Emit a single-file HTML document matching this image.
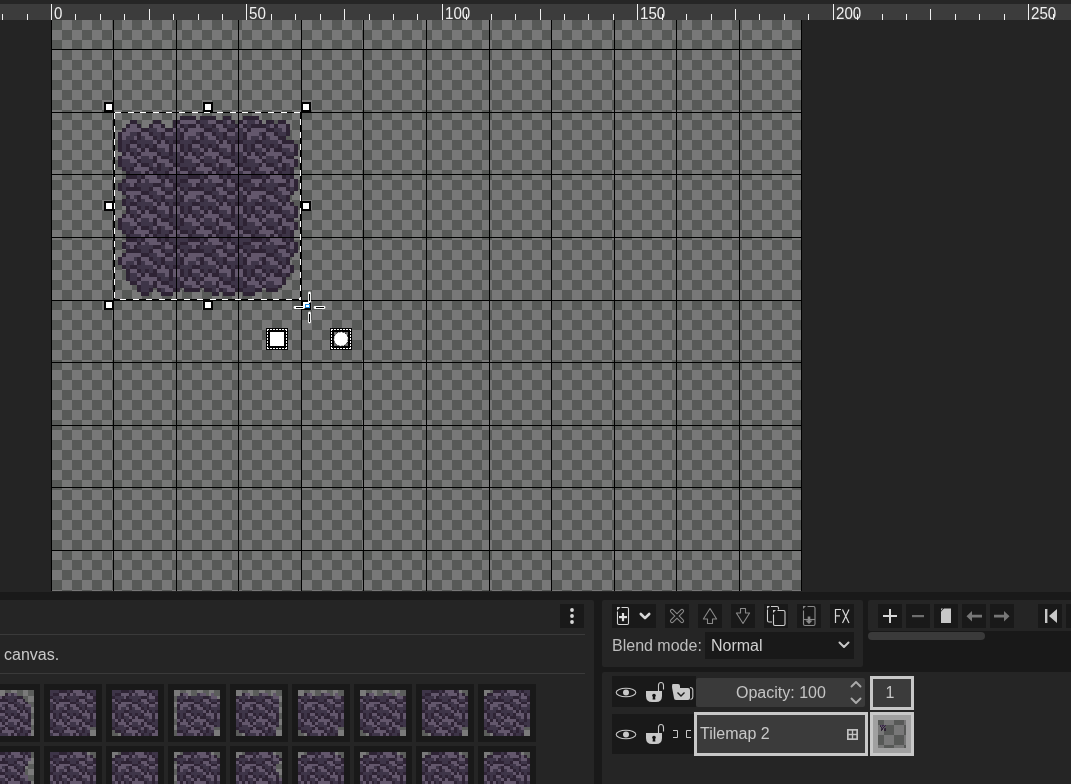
<!DOCTYPE html>
<html><head><meta charset="utf-8"><style>
html,body{margin:0;padding:0;width:1071px;height:784px;overflow:hidden;background:#191919;font-family:"Liberation Sans",sans-serif;}
.abs{position:absolute}
</style></head><body>
<div style="position:relative;width:1071px;height:784px;overflow:hidden;will-change:transform">
<svg width="1071" height="600" viewBox="0 0 1071 600" style="position:absolute;left:0;top:0" shape-rendering="crispEdges">
<defs><pattern id="chk" x="52" y="20" width="20" height="20" patternUnits="userSpaceOnUse"><rect width="20" height="20" fill="#787878"/><rect width="10" height="10" fill="#575957"/><rect x="10" y="10" width="10" height="10" fill="#575957"/></pattern></defs>
<rect x="0" y="0" width="1071" height="600" fill="#191919"/>
<rect x="0" y="0" width="1071" height="4" fill="#262626"/>
<rect x="0" y="4" width="1071" height="16" fill="#3c3c3c"/>
<rect x="0" y="20" width="1071" height="572" fill="#242424"/>
<rect x="52" y="20" width="749" height="571" fill="url(#chk)"/>
<rect x="180" y="116" width="16" height="4" fill="#2e2334"/>
<rect x="200" y="116" width="16" height="4" fill="#2e2334"/>
<rect x="223" y="116" width="8" height="4" fill="#2e2334"/>
<rect x="243" y="116" width="16" height="4" fill="#2e2334"/>
<rect x="130" y="120" width="7" height="4" fill="#2e2334"/>
<rect x="153" y="120" width="8" height="4" fill="#2e2334"/>
<rect x="173" y="120" width="7" height="4" fill="#2e2334"/>
<rect x="180" y="120" width="16" height="4" fill="#63576c"/>
<rect x="196" y="120" width="4" height="4" fill="#2e2334"/>
<rect x="200" y="120" width="8" height="4" fill="#3e3548"/>
<rect x="208" y="120" width="8" height="4" fill="#63576c"/>
<rect x="216" y="120" width="7" height="4" fill="#2e2334"/>
<rect x="223" y="120" width="4" height="4" fill="#3e3548"/>
<rect x="227" y="120" width="4" height="4" fill="#63576c"/>
<rect x="231" y="120" width="4" height="4" fill="#2e2334"/>
<rect x="239" y="120" width="4" height="4" fill="#2e2334"/>
<rect x="243" y="120" width="4" height="4" fill="#63576c"/>
<rect x="247" y="120" width="8" height="4" fill="#3e3548"/>
<rect x="255" y="120" width="4" height="4" fill="#63576c"/>
<rect x="259" y="120" width="3" height="4" fill="#2e2334"/>
<rect x="266" y="120" width="8" height="4" fill="#2e2334"/>
<rect x="278" y="120" width="8" height="4" fill="#2e2334"/>
<rect x="126" y="124" width="4" height="4" fill="#2e2334"/>
<rect x="130" y="124" width="7" height="4" fill="#63576c"/>
<rect x="137" y="124" width="4" height="4" fill="#2e2334"/>
<rect x="149" y="124" width="4" height="4" fill="#2e2334"/>
<rect x="153" y="124" width="8" height="4" fill="#63576c"/>
<rect x="161" y="124" width="4" height="4" fill="#2e2334"/>
<rect x="173" y="124" width="4" height="4" fill="#2e2334"/>
<rect x="177" y="124" width="3" height="4" fill="#63576c"/>
<rect x="180" y="124" width="4" height="4" fill="#2e2334"/>
<rect x="184" y="124" width="4" height="4" fill="#3e3548"/>
<rect x="188" y="124" width="8" height="4" fill="#2e2334"/>
<rect x="196" y="124" width="4" height="4" fill="#63576c"/>
<rect x="200" y="124" width="4" height="4" fill="#2e2334"/>
<rect x="204" y="124" width="8" height="4" fill="#3e3548"/>
<rect x="212" y="124" width="4" height="4" fill="#2e2334"/>
<rect x="216" y="124" width="7" height="4" fill="#63576c"/>
<rect x="223" y="124" width="4" height="4" fill="#2e2334"/>
<rect x="227" y="124" width="8" height="4" fill="#3e3548"/>
<rect x="235" y="124" width="4" height="4" fill="#2e2334"/>
<rect x="239" y="124" width="4" height="4" fill="#63576c"/>
<rect x="243" y="124" width="4" height="4" fill="#2e2334"/>
<rect x="247" y="124" width="4" height="4" fill="#3e3548"/>
<rect x="251" y="124" width="15" height="4" fill="#2e2334"/>
<rect x="266" y="124" width="4" height="4" fill="#3e3548"/>
<rect x="270" y="124" width="4" height="4" fill="#63576c"/>
<rect x="274" y="124" width="4" height="4" fill="#2e2334"/>
<rect x="278" y="124" width="8" height="4" fill="#63576c"/>
<rect x="286" y="124" width="4" height="4" fill="#2e2334"/>
<rect x="122" y="128" width="4" height="4" fill="#2e2334"/>
<rect x="126" y="128" width="15" height="4" fill="#63576c"/>
<rect x="141" y="128" width="8" height="4" fill="#2e2334"/>
<rect x="149" y="128" width="8" height="4" fill="#3e3548"/>
<rect x="157" y="128" width="8" height="4" fill="#63576c"/>
<rect x="165" y="128" width="8" height="4" fill="#2e2334"/>
<rect x="173" y="128" width="4" height="4" fill="#63576c"/>
<rect x="177" y="128" width="3" height="4" fill="#3e3548"/>
<rect x="180" y="128" width="4" height="4" fill="#63576c"/>
<rect x="184" y="128" width="4" height="4" fill="#2e2334"/>
<rect x="188" y="128" width="16" height="4" fill="#63576c"/>
<rect x="204" y="128" width="8" height="4" fill="#2e2334"/>
<rect x="212" y="128" width="7" height="4" fill="#3e3548"/>
<rect x="219" y="128" width="8" height="4" fill="#63576c"/>
<rect x="227" y="128" width="8" height="4" fill="#2e2334"/>
<rect x="235" y="128" width="4" height="4" fill="#63576c"/>
<rect x="239" y="128" width="4" height="4" fill="#3e3548"/>
<rect x="243" y="128" width="4" height="4" fill="#63576c"/>
<rect x="247" y="128" width="4" height="4" fill="#2e2334"/>
<rect x="251" y="128" width="15" height="4" fill="#63576c"/>
<rect x="266" y="128" width="8" height="4" fill="#2e2334"/>
<rect x="274" y="128" width="8" height="4" fill="#3e3548"/>
<rect x="282" y="128" width="4" height="4" fill="#63576c"/>
<rect x="286" y="128" width="4" height="4" fill="#2e2334"/>
<rect x="118" y="132" width="4" height="4" fill="#2e2334"/>
<rect x="122" y="132" width="8" height="4" fill="#63576c"/>
<rect x="130" y="132" width="7" height="4" fill="#3e3548"/>
<rect x="137" y="132" width="4" height="4" fill="#2e2334"/>
<rect x="141" y="132" width="8" height="4" fill="#63576c"/>
<rect x="149" y="132" width="4" height="4" fill="#2e2334"/>
<rect x="153" y="132" width="8" height="4" fill="#3e3548"/>
<rect x="161" y="132" width="4" height="4" fill="#2e2334"/>
<rect x="165" y="132" width="8" height="4" fill="#63576c"/>
<rect x="173" y="132" width="7" height="4" fill="#3e3548"/>
<rect x="180" y="132" width="4" height="4" fill="#2e2334"/>
<rect x="184" y="132" width="12" height="4" fill="#63576c"/>
<rect x="196" y="132" width="4" height="4" fill="#3e3548"/>
<rect x="200" y="132" width="4" height="4" fill="#2e2334"/>
<rect x="204" y="132" width="8" height="4" fill="#63576c"/>
<rect x="212" y="132" width="4" height="4" fill="#2e2334"/>
<rect x="216" y="132" width="7" height="4" fill="#3e3548"/>
<rect x="223" y="132" width="4" height="4" fill="#2e2334"/>
<rect x="227" y="132" width="8" height="4" fill="#63576c"/>
<rect x="235" y="132" width="8" height="4" fill="#3e3548"/>
<rect x="243" y="132" width="4" height="4" fill="#2e2334"/>
<rect x="247" y="132" width="12" height="4" fill="#63576c"/>
<rect x="259" y="132" width="3" height="4" fill="#3e3548"/>
<rect x="262" y="132" width="4" height="4" fill="#2e2334"/>
<rect x="266" y="132" width="8" height="4" fill="#63576c"/>
<rect x="274" y="132" width="4" height="4" fill="#2e2334"/>
<rect x="278" y="132" width="8" height="4" fill="#3e3548"/>
<rect x="286" y="132" width="4" height="4" fill="#2e2334"/>
<rect x="118" y="136" width="4" height="4" fill="#2e2334"/>
<rect x="122" y="136" width="4" height="4" fill="#63576c"/>
<rect x="126" y="136" width="8" height="4" fill="#3e3548"/>
<rect x="134" y="136" width="3" height="4" fill="#63576c"/>
<rect x="137" y="136" width="4" height="4" fill="#2e2334"/>
<rect x="141" y="136" width="4" height="4" fill="#3e3548"/>
<rect x="145" y="136" width="8" height="4" fill="#63576c"/>
<rect x="153" y="136" width="4" height="4" fill="#2e2334"/>
<rect x="157" y="136" width="4" height="4" fill="#3e3548"/>
<rect x="161" y="136" width="4" height="4" fill="#2e2334"/>
<rect x="165" y="136" width="15" height="4" fill="#3e3548"/>
<rect x="180" y="136" width="4" height="4" fill="#2e2334"/>
<rect x="184" y="136" width="4" height="4" fill="#63576c"/>
<rect x="188" y="136" width="8" height="4" fill="#3e3548"/>
<rect x="196" y="136" width="4" height="4" fill="#63576c"/>
<rect x="200" y="136" width="4" height="4" fill="#2e2334"/>
<rect x="204" y="136" width="4" height="4" fill="#3e3548"/>
<rect x="208" y="136" width="8" height="4" fill="#63576c"/>
<rect x="216" y="136" width="3" height="4" fill="#2e2334"/>
<rect x="219" y="136" width="4" height="4" fill="#3e3548"/>
<rect x="223" y="136" width="4" height="4" fill="#2e2334"/>
<rect x="227" y="136" width="16" height="4" fill="#3e3548"/>
<rect x="243" y="136" width="4" height="4" fill="#2e2334"/>
<rect x="247" y="136" width="4" height="4" fill="#63576c"/>
<rect x="251" y="136" width="8" height="4" fill="#3e3548"/>
<rect x="259" y="136" width="3" height="4" fill="#63576c"/>
<rect x="262" y="136" width="4" height="4" fill="#2e2334"/>
<rect x="266" y="136" width="4" height="4" fill="#3e3548"/>
<rect x="270" y="136" width="8" height="4" fill="#63576c"/>
<rect x="278" y="136" width="8" height="4" fill="#2e2334"/>
<rect x="118" y="140" width="4" height="4" fill="#2e2334"/>
<rect x="122" y="140" width="8" height="4" fill="#3e3548"/>
<rect x="130" y="140" width="7" height="4" fill="#2e2334"/>
<rect x="137" y="140" width="16" height="4" fill="#3e3548"/>
<rect x="153" y="140" width="4" height="4" fill="#63576c"/>
<rect x="157" y="140" width="4" height="4" fill="#2e2334"/>
<rect x="161" y="140" width="4" height="4" fill="#63576c"/>
<rect x="165" y="140" width="4" height="4" fill="#2e2334"/>
<rect x="169" y="140" width="4" height="4" fill="#3e3548"/>
<rect x="173" y="140" width="7" height="4" fill="#2e2334"/>
<rect x="180" y="140" width="12" height="4" fill="#3e3548"/>
<rect x="192" y="140" width="8" height="4" fill="#2e2334"/>
<rect x="200" y="140" width="16" height="4" fill="#3e3548"/>
<rect x="216" y="140" width="3" height="4" fill="#63576c"/>
<rect x="219" y="140" width="4" height="4" fill="#2e2334"/>
<rect x="223" y="140" width="4" height="4" fill="#63576c"/>
<rect x="227" y="140" width="4" height="4" fill="#2e2334"/>
<rect x="231" y="140" width="4" height="4" fill="#3e3548"/>
<rect x="235" y="140" width="8" height="4" fill="#2e2334"/>
<rect x="243" y="140" width="12" height="4" fill="#3e3548"/>
<rect x="255" y="140" width="7" height="4" fill="#2e2334"/>
<rect x="262" y="140" width="16" height="4" fill="#3e3548"/>
<rect x="278" y="140" width="4" height="4" fill="#63576c"/>
<rect x="282" y="140" width="12" height="4" fill="#2e2334"/>
<rect x="118" y="144" width="4" height="4" fill="#2e2334"/>
<rect x="122" y="144" width="4" height="4" fill="#3e3548"/>
<rect x="126" y="144" width="4" height="4" fill="#2e2334"/>
<rect x="130" y="144" width="7" height="4" fill="#63576c"/>
<rect x="137" y="144" width="4" height="4" fill="#2e2334"/>
<rect x="141" y="144" width="4" height="4" fill="#3e3548"/>
<rect x="145" y="144" width="4" height="4" fill="#2e2334"/>
<rect x="149" y="144" width="4" height="4" fill="#3e3548"/>
<rect x="153" y="144" width="4" height="4" fill="#2e2334"/>
<rect x="157" y="144" width="12" height="4" fill="#63576c"/>
<rect x="169" y="144" width="4" height="4" fill="#2e2334"/>
<rect x="173" y="144" width="7" height="4" fill="#63576c"/>
<rect x="180" y="144" width="4" height="4" fill="#2e2334"/>
<rect x="184" y="144" width="4" height="4" fill="#3e3548"/>
<rect x="188" y="144" width="4" height="4" fill="#2e2334"/>
<rect x="192" y="144" width="8" height="4" fill="#63576c"/>
<rect x="200" y="144" width="4" height="4" fill="#2e2334"/>
<rect x="204" y="144" width="4" height="4" fill="#3e3548"/>
<rect x="208" y="144" width="4" height="4" fill="#2e2334"/>
<rect x="212" y="144" width="4" height="4" fill="#3e3548"/>
<rect x="216" y="144" width="3" height="4" fill="#2e2334"/>
<rect x="219" y="144" width="12" height="4" fill="#63576c"/>
<rect x="231" y="144" width="4" height="4" fill="#2e2334"/>
<rect x="235" y="144" width="8" height="4" fill="#63576c"/>
<rect x="243" y="144" width="4" height="4" fill="#2e2334"/>
<rect x="247" y="144" width="4" height="4" fill="#3e3548"/>
<rect x="251" y="144" width="4" height="4" fill="#2e2334"/>
<rect x="255" y="144" width="7" height="4" fill="#63576c"/>
<rect x="262" y="144" width="4" height="4" fill="#2e2334"/>
<rect x="266" y="144" width="4" height="4" fill="#3e3548"/>
<rect x="270" y="144" width="4" height="4" fill="#2e2334"/>
<rect x="274" y="144" width="4" height="4" fill="#3e3548"/>
<rect x="278" y="144" width="4" height="4" fill="#2e2334"/>
<rect x="282" y="144" width="12" height="4" fill="#63576c"/>
<rect x="294" y="144" width="4" height="4" fill="#2e2334"/>
<rect x="118" y="148" width="4" height="4" fill="#2e2334"/>
<rect x="122" y="148" width="4" height="4" fill="#3e3548"/>
<rect x="126" y="148" width="4" height="4" fill="#2e2334"/>
<rect x="130" y="148" width="7" height="4" fill="#3e3548"/>
<rect x="137" y="148" width="4" height="4" fill="#63576c"/>
<rect x="141" y="148" width="4" height="4" fill="#2e2334"/>
<rect x="145" y="148" width="4" height="4" fill="#63576c"/>
<rect x="149" y="148" width="8" height="4" fill="#2e2334"/>
<rect x="157" y="148" width="8" height="4" fill="#3e3548"/>
<rect x="165" y="148" width="4" height="4" fill="#63576c"/>
<rect x="169" y="148" width="4" height="4" fill="#2e2334"/>
<rect x="173" y="148" width="7" height="4" fill="#63576c"/>
<rect x="180" y="148" width="4" height="4" fill="#2e2334"/>
<rect x="184" y="148" width="4" height="4" fill="#3e3548"/>
<rect x="188" y="148" width="4" height="4" fill="#2e2334"/>
<rect x="192" y="148" width="8" height="4" fill="#3e3548"/>
<rect x="200" y="148" width="4" height="4" fill="#63576c"/>
<rect x="204" y="148" width="4" height="4" fill="#2e2334"/>
<rect x="208" y="148" width="4" height="4" fill="#63576c"/>
<rect x="212" y="148" width="7" height="4" fill="#2e2334"/>
<rect x="219" y="148" width="8" height="4" fill="#3e3548"/>
<rect x="227" y="148" width="4" height="4" fill="#63576c"/>
<rect x="231" y="148" width="4" height="4" fill="#2e2334"/>
<rect x="235" y="148" width="8" height="4" fill="#63576c"/>
<rect x="243" y="148" width="4" height="4" fill="#2e2334"/>
<rect x="247" y="148" width="4" height="4" fill="#3e3548"/>
<rect x="251" y="148" width="4" height="4" fill="#2e2334"/>
<rect x="255" y="148" width="7" height="4" fill="#3e3548"/>
<rect x="262" y="148" width="4" height="4" fill="#63576c"/>
<rect x="266" y="148" width="4" height="4" fill="#2e2334"/>
<rect x="270" y="148" width="4" height="4" fill="#63576c"/>
<rect x="274" y="148" width="8" height="4" fill="#2e2334"/>
<rect x="282" y="148" width="8" height="4" fill="#3e3548"/>
<rect x="290" y="148" width="4" height="4" fill="#63576c"/>
<rect x="294" y="148" width="4" height="4" fill="#2e2334"/>
<rect x="122" y="152" width="4" height="4" fill="#2e2334"/>
<rect x="126" y="152" width="4" height="4" fill="#63576c"/>
<rect x="130" y="152" width="4" height="4" fill="#2e2334"/>
<rect x="134" y="152" width="3" height="4" fill="#3e3548"/>
<rect x="137" y="152" width="4" height="4" fill="#2e2334"/>
<rect x="141" y="152" width="16" height="4" fill="#63576c"/>
<rect x="157" y="152" width="4" height="4" fill="#2e2334"/>
<rect x="161" y="152" width="8" height="4" fill="#3e3548"/>
<rect x="169" y="152" width="4" height="4" fill="#2e2334"/>
<rect x="173" y="152" width="7" height="4" fill="#3e3548"/>
<rect x="180" y="152" width="4" height="4" fill="#63576c"/>
<rect x="184" y="152" width="4" height="4" fill="#2e2334"/>
<rect x="188" y="152" width="4" height="4" fill="#63576c"/>
<rect x="192" y="152" width="4" height="4" fill="#2e2334"/>
<rect x="196" y="152" width="4" height="4" fill="#3e3548"/>
<rect x="200" y="152" width="4" height="4" fill="#2e2334"/>
<rect x="204" y="152" width="15" height="4" fill="#63576c"/>
<rect x="219" y="152" width="4" height="4" fill="#2e2334"/>
<rect x="223" y="152" width="8" height="4" fill="#3e3548"/>
<rect x="231" y="152" width="4" height="4" fill="#2e2334"/>
<rect x="235" y="152" width="8" height="4" fill="#3e3548"/>
<rect x="243" y="152" width="4" height="4" fill="#63576c"/>
<rect x="247" y="152" width="4" height="4" fill="#2e2334"/>
<rect x="251" y="152" width="4" height="4" fill="#63576c"/>
<rect x="255" y="152" width="4" height="4" fill="#2e2334"/>
<rect x="259" y="152" width="3" height="4" fill="#3e3548"/>
<rect x="262" y="152" width="4" height="4" fill="#2e2334"/>
<rect x="266" y="152" width="16" height="4" fill="#63576c"/>
<rect x="282" y="152" width="4" height="4" fill="#2e2334"/>
<rect x="286" y="152" width="8" height="4" fill="#3e3548"/>
<rect x="294" y="152" width="4" height="4" fill="#2e2334"/>
<rect x="118" y="156" width="4" height="3" fill="#2e2334"/>
<rect x="122" y="156" width="12" height="3" fill="#63576c"/>
<rect x="134" y="156" width="3" height="3" fill="#2e2334"/>
<rect x="137" y="156" width="4" height="3" fill="#63576c"/>
<rect x="141" y="156" width="8" height="3" fill="#3e3548"/>
<rect x="149" y="156" width="4" height="3" fill="#63576c"/>
<rect x="153" y="156" width="4" height="3" fill="#2e2334"/>
<rect x="157" y="156" width="4" height="3" fill="#63576c"/>
<rect x="161" y="156" width="8" height="3" fill="#2e2334"/>
<rect x="169" y="156" width="11" height="3" fill="#3e3548"/>
<rect x="180" y="156" width="4" height="3" fill="#2e2334"/>
<rect x="184" y="156" width="12" height="3" fill="#63576c"/>
<rect x="196" y="156" width="4" height="3" fill="#2e2334"/>
<rect x="200" y="156" width="4" height="3" fill="#63576c"/>
<rect x="204" y="156" width="8" height="3" fill="#3e3548"/>
<rect x="212" y="156" width="4" height="3" fill="#63576c"/>
<rect x="216" y="156" width="3" height="3" fill="#2e2334"/>
<rect x="219" y="156" width="4" height="3" fill="#63576c"/>
<rect x="223" y="156" width="8" height="3" fill="#2e2334"/>
<rect x="231" y="156" width="12" height="3" fill="#3e3548"/>
<rect x="243" y="156" width="4" height="3" fill="#2e2334"/>
<rect x="247" y="156" width="12" height="3" fill="#63576c"/>
<rect x="259" y="156" width="3" height="3" fill="#2e2334"/>
<rect x="262" y="156" width="4" height="3" fill="#63576c"/>
<rect x="266" y="156" width="8" height="3" fill="#3e3548"/>
<rect x="274" y="156" width="4" height="3" fill="#63576c"/>
<rect x="278" y="156" width="4" height="3" fill="#2e2334"/>
<rect x="282" y="156" width="4" height="3" fill="#63576c"/>
<rect x="286" y="156" width="8" height="3" fill="#2e2334"/>
<rect x="118" y="159" width="4" height="4" fill="#2e2334"/>
<rect x="122" y="159" width="8" height="4" fill="#3e3548"/>
<rect x="130" y="159" width="7" height="4" fill="#63576c"/>
<rect x="137" y="159" width="4" height="4" fill="#2e2334"/>
<rect x="141" y="159" width="12" height="4" fill="#3e3548"/>
<rect x="153" y="159" width="4" height="4" fill="#2e2334"/>
<rect x="157" y="159" width="12" height="4" fill="#63576c"/>
<rect x="169" y="159" width="4" height="4" fill="#2e2334"/>
<rect x="173" y="159" width="7" height="4" fill="#3e3548"/>
<rect x="180" y="159" width="4" height="4" fill="#2e2334"/>
<rect x="184" y="159" width="8" height="4" fill="#3e3548"/>
<rect x="192" y="159" width="8" height="4" fill="#63576c"/>
<rect x="200" y="159" width="4" height="4" fill="#2e2334"/>
<rect x="204" y="159" width="12" height="4" fill="#3e3548"/>
<rect x="216" y="159" width="3" height="4" fill="#2e2334"/>
<rect x="219" y="159" width="12" height="4" fill="#63576c"/>
<rect x="231" y="159" width="4" height="4" fill="#2e2334"/>
<rect x="235" y="159" width="8" height="4" fill="#3e3548"/>
<rect x="243" y="159" width="4" height="4" fill="#2e2334"/>
<rect x="247" y="159" width="8" height="4" fill="#3e3548"/>
<rect x="255" y="159" width="7" height="4" fill="#63576c"/>
<rect x="262" y="159" width="4" height="4" fill="#2e2334"/>
<rect x="266" y="159" width="12" height="4" fill="#3e3548"/>
<rect x="278" y="159" width="4" height="4" fill="#2e2334"/>
<rect x="282" y="159" width="12" height="4" fill="#63576c"/>
<rect x="294" y="159" width="4" height="4" fill="#2e2334"/>
<rect x="118" y="163" width="4" height="4" fill="#2e2334"/>
<rect x="122" y="163" width="12" height="4" fill="#3e3548"/>
<rect x="134" y="163" width="3" height="4" fill="#2e2334"/>
<rect x="137" y="163" width="4" height="4" fill="#63576c"/>
<rect x="141" y="163" width="8" height="4" fill="#2e2334"/>
<rect x="149" y="163" width="4" height="4" fill="#3e3548"/>
<rect x="153" y="163" width="4" height="4" fill="#63576c"/>
<rect x="157" y="163" width="4" height="4" fill="#2e2334"/>
<rect x="161" y="163" width="4" height="4" fill="#3e3548"/>
<rect x="165" y="163" width="8" height="4" fill="#63576c"/>
<rect x="173" y="163" width="7" height="4" fill="#2e2334"/>
<rect x="180" y="163" width="16" height="4" fill="#3e3548"/>
<rect x="196" y="163" width="4" height="4" fill="#2e2334"/>
<rect x="200" y="163" width="4" height="4" fill="#63576c"/>
<rect x="204" y="163" width="8" height="4" fill="#2e2334"/>
<rect x="212" y="163" width="4" height="4" fill="#3e3548"/>
<rect x="216" y="163" width="3" height="4" fill="#63576c"/>
<rect x="219" y="163" width="4" height="4" fill="#2e2334"/>
<rect x="223" y="163" width="4" height="4" fill="#3e3548"/>
<rect x="227" y="163" width="8" height="4" fill="#63576c"/>
<rect x="235" y="163" width="8" height="4" fill="#2e2334"/>
<rect x="243" y="163" width="16" height="4" fill="#3e3548"/>
<rect x="259" y="163" width="3" height="4" fill="#2e2334"/>
<rect x="262" y="163" width="4" height="4" fill="#63576c"/>
<rect x="266" y="163" width="8" height="4" fill="#2e2334"/>
<rect x="274" y="163" width="4" height="4" fill="#3e3548"/>
<rect x="278" y="163" width="4" height="4" fill="#63576c"/>
<rect x="282" y="163" width="4" height="4" fill="#2e2334"/>
<rect x="286" y="163" width="4" height="4" fill="#3e3548"/>
<rect x="290" y="163" width="4" height="4" fill="#63576c"/>
<rect x="294" y="163" width="4" height="4" fill="#2e2334"/>
<rect x="122" y="167" width="4" height="4" fill="#2e2334"/>
<rect x="126" y="167" width="4" height="4" fill="#3e3548"/>
<rect x="130" y="167" width="4" height="4" fill="#2e2334"/>
<rect x="134" y="167" width="15" height="4" fill="#63576c"/>
<rect x="149" y="167" width="4" height="4" fill="#2e2334"/>
<rect x="153" y="167" width="4" height="4" fill="#3e3548"/>
<rect x="157" y="167" width="4" height="4" fill="#2e2334"/>
<rect x="161" y="167" width="8" height="4" fill="#3e3548"/>
<rect x="169" y="167" width="4" height="4" fill="#2e2334"/>
<rect x="173" y="167" width="7" height="4" fill="#63576c"/>
<rect x="180" y="167" width="8" height="4" fill="#2e2334"/>
<rect x="188" y="167" width="4" height="4" fill="#3e3548"/>
<rect x="192" y="167" width="4" height="4" fill="#2e2334"/>
<rect x="196" y="167" width="16" height="4" fill="#63576c"/>
<rect x="212" y="167" width="4" height="4" fill="#2e2334"/>
<rect x="216" y="167" width="3" height="4" fill="#3e3548"/>
<rect x="219" y="167" width="4" height="4" fill="#2e2334"/>
<rect x="223" y="167" width="8" height="4" fill="#3e3548"/>
<rect x="231" y="167" width="4" height="4" fill="#2e2334"/>
<rect x="235" y="167" width="8" height="4" fill="#63576c"/>
<rect x="243" y="167" width="8" height="4" fill="#2e2334"/>
<rect x="251" y="167" width="4" height="4" fill="#3e3548"/>
<rect x="255" y="167" width="4" height="4" fill="#2e2334"/>
<rect x="259" y="167" width="15" height="4" fill="#63576c"/>
<rect x="274" y="167" width="4" height="4" fill="#2e2334"/>
<rect x="278" y="167" width="4" height="4" fill="#3e3548"/>
<rect x="282" y="167" width="4" height="4" fill="#2e2334"/>
<rect x="286" y="167" width="4" height="4" fill="#3e3548"/>
<rect x="290" y="167" width="4" height="4" fill="#2e2334"/>
<rect x="126" y="171" width="4" height="4" fill="#2e2334"/>
<rect x="130" y="171" width="11" height="4" fill="#3e3548"/>
<rect x="141" y="171" width="4" height="4" fill="#63576c"/>
<rect x="145" y="171" width="4" height="4" fill="#2e2334"/>
<rect x="149" y="171" width="4" height="4" fill="#63576c"/>
<rect x="153" y="171" width="4" height="4" fill="#2e2334"/>
<rect x="157" y="171" width="8" height="4" fill="#3e3548"/>
<rect x="165" y="171" width="4" height="4" fill="#2e2334"/>
<rect x="169" y="171" width="8" height="4" fill="#63576c"/>
<rect x="177" y="171" width="3" height="4" fill="#3e3548"/>
<rect x="180" y="171" width="8" height="4" fill="#63576c"/>
<rect x="188" y="171" width="4" height="4" fill="#2e2334"/>
<rect x="192" y="171" width="12" height="4" fill="#3e3548"/>
<rect x="204" y="171" width="4" height="4" fill="#63576c"/>
<rect x="208" y="171" width="4" height="4" fill="#2e2334"/>
<rect x="212" y="171" width="4" height="4" fill="#63576c"/>
<rect x="216" y="171" width="3" height="4" fill="#2e2334"/>
<rect x="219" y="171" width="8" height="4" fill="#3e3548"/>
<rect x="227" y="171" width="4" height="4" fill="#2e2334"/>
<rect x="231" y="171" width="8" height="4" fill="#63576c"/>
<rect x="239" y="171" width="4" height="4" fill="#3e3548"/>
<rect x="243" y="171" width="8" height="4" fill="#63576c"/>
<rect x="251" y="171" width="4" height="4" fill="#2e2334"/>
<rect x="255" y="171" width="11" height="4" fill="#3e3548"/>
<rect x="266" y="171" width="4" height="4" fill="#63576c"/>
<rect x="270" y="171" width="4" height="4" fill="#2e2334"/>
<rect x="274" y="171" width="4" height="4" fill="#63576c"/>
<rect x="278" y="171" width="4" height="4" fill="#2e2334"/>
<rect x="282" y="171" width="8" height="4" fill="#3e3548"/>
<rect x="290" y="171" width="4" height="4" fill="#2e2334"/>
<rect x="126" y="175" width="11" height="4" fill="#2e2334"/>
<rect x="137" y="175" width="4" height="4" fill="#3e3548"/>
<rect x="141" y="175" width="4" height="4" fill="#2e2334"/>
<rect x="145" y="175" width="12" height="4" fill="#63576c"/>
<rect x="157" y="175" width="4" height="4" fill="#2e2334"/>
<rect x="161" y="175" width="4" height="4" fill="#3e3548"/>
<rect x="165" y="175" width="4" height="4" fill="#2e2334"/>
<rect x="169" y="175" width="19" height="4" fill="#3e3548"/>
<rect x="188" y="175" width="12" height="4" fill="#2e2334"/>
<rect x="200" y="175" width="4" height="4" fill="#3e3548"/>
<rect x="204" y="175" width="4" height="4" fill="#2e2334"/>
<rect x="208" y="175" width="11" height="4" fill="#63576c"/>
<rect x="219" y="175" width="4" height="4" fill="#2e2334"/>
<rect x="223" y="175" width="4" height="4" fill="#3e3548"/>
<rect x="227" y="175" width="4" height="4" fill="#2e2334"/>
<rect x="231" y="175" width="20" height="4" fill="#3e3548"/>
<rect x="251" y="175" width="11" height="4" fill="#2e2334"/>
<rect x="262" y="175" width="4" height="4" fill="#3e3548"/>
<rect x="266" y="175" width="4" height="4" fill="#2e2334"/>
<rect x="270" y="175" width="12" height="4" fill="#63576c"/>
<rect x="282" y="175" width="4" height="4" fill="#2e2334"/>
<rect x="286" y="175" width="4" height="4" fill="#3e3548"/>
<rect x="290" y="175" width="4" height="4" fill="#2e2334"/>
<rect x="122" y="179" width="4" height="4" fill="#2e2334"/>
<rect x="126" y="179" width="11" height="4" fill="#63576c"/>
<rect x="137" y="179" width="4" height="4" fill="#2e2334"/>
<rect x="141" y="179" width="4" height="4" fill="#63576c"/>
<rect x="145" y="179" width="4" height="4" fill="#3e3548"/>
<rect x="149" y="179" width="12" height="4" fill="#63576c"/>
<rect x="161" y="179" width="4" height="4" fill="#2e2334"/>
<rect x="165" y="179" width="4" height="4" fill="#63576c"/>
<rect x="169" y="179" width="4" height="4" fill="#2e2334"/>
<rect x="173" y="179" width="7" height="4" fill="#3e3548"/>
<rect x="180" y="179" width="8" height="4" fill="#2e2334"/>
<rect x="188" y="179" width="12" height="4" fill="#63576c"/>
<rect x="200" y="179" width="4" height="4" fill="#2e2334"/>
<rect x="204" y="179" width="4" height="4" fill="#63576c"/>
<rect x="208" y="179" width="4" height="4" fill="#3e3548"/>
<rect x="212" y="179" width="11" height="4" fill="#63576c"/>
<rect x="223" y="179" width="4" height="4" fill="#2e2334"/>
<rect x="227" y="179" width="4" height="4" fill="#63576c"/>
<rect x="231" y="179" width="4" height="4" fill="#2e2334"/>
<rect x="235" y="179" width="8" height="4" fill="#3e3548"/>
<rect x="243" y="179" width="8" height="4" fill="#2e2334"/>
<rect x="251" y="179" width="11" height="4" fill="#63576c"/>
<rect x="262" y="179" width="4" height="4" fill="#2e2334"/>
<rect x="266" y="179" width="4" height="4" fill="#63576c"/>
<rect x="270" y="179" width="4" height="4" fill="#3e3548"/>
<rect x="274" y="179" width="12" height="4" fill="#63576c"/>
<rect x="286" y="179" width="4" height="4" fill="#2e2334"/>
<rect x="290" y="179" width="4" height="4" fill="#63576c"/>
<rect x="294" y="179" width="4" height="4" fill="#2e2334"/>
<rect x="118" y="183" width="4" height="4" fill="#2e2334"/>
<rect x="122" y="183" width="8" height="4" fill="#3e3548"/>
<rect x="130" y="183" width="4" height="4" fill="#63576c"/>
<rect x="134" y="183" width="3" height="4" fill="#2e2334"/>
<rect x="137" y="183" width="16" height="4" fill="#3e3548"/>
<rect x="153" y="183" width="8" height="4" fill="#2e2334"/>
<rect x="161" y="183" width="4" height="4" fill="#3e3548"/>
<rect x="165" y="183" width="8" height="4" fill="#63576c"/>
<rect x="173" y="183" width="7" height="4" fill="#2e2334"/>
<rect x="180" y="183" width="12" height="4" fill="#3e3548"/>
<rect x="192" y="183" width="4" height="4" fill="#63576c"/>
<rect x="196" y="183" width="4" height="4" fill="#2e2334"/>
<rect x="200" y="183" width="16" height="4" fill="#3e3548"/>
<rect x="216" y="183" width="7" height="4" fill="#2e2334"/>
<rect x="223" y="183" width="4" height="4" fill="#3e3548"/>
<rect x="227" y="183" width="8" height="4" fill="#63576c"/>
<rect x="235" y="183" width="8" height="4" fill="#2e2334"/>
<rect x="243" y="183" width="12" height="4" fill="#3e3548"/>
<rect x="255" y="183" width="4" height="4" fill="#63576c"/>
<rect x="259" y="183" width="3" height="4" fill="#2e2334"/>
<rect x="262" y="183" width="16" height="4" fill="#3e3548"/>
<rect x="278" y="183" width="8" height="4" fill="#2e2334"/>
<rect x="286" y="183" width="4" height="4" fill="#3e3548"/>
<rect x="290" y="183" width="4" height="4" fill="#63576c"/>
<rect x="294" y="183" width="4" height="4" fill="#2e2334"/>
<rect x="118" y="187" width="4" height="4" fill="#2e2334"/>
<rect x="122" y="187" width="4" height="4" fill="#3e3548"/>
<rect x="126" y="187" width="15" height="4" fill="#2e2334"/>
<rect x="141" y="187" width="8" height="4" fill="#3e3548"/>
<rect x="149" y="187" width="4" height="4" fill="#2e2334"/>
<rect x="153" y="187" width="8" height="4" fill="#63576c"/>
<rect x="161" y="187" width="4" height="4" fill="#2e2334"/>
<rect x="165" y="187" width="8" height="4" fill="#3e3548"/>
<rect x="173" y="187" width="4" height="4" fill="#2e2334"/>
<rect x="177" y="187" width="3" height="4" fill="#63576c"/>
<rect x="180" y="187" width="4" height="4" fill="#2e2334"/>
<rect x="184" y="187" width="4" height="4" fill="#3e3548"/>
<rect x="188" y="187" width="16" height="4" fill="#2e2334"/>
<rect x="204" y="187" width="8" height="4" fill="#3e3548"/>
<rect x="212" y="187" width="4" height="4" fill="#2e2334"/>
<rect x="216" y="187" width="7" height="4" fill="#63576c"/>
<rect x="223" y="187" width="4" height="4" fill="#2e2334"/>
<rect x="227" y="187" width="8" height="4" fill="#3e3548"/>
<rect x="235" y="187" width="4" height="4" fill="#2e2334"/>
<rect x="239" y="187" width="4" height="4" fill="#63576c"/>
<rect x="243" y="187" width="4" height="4" fill="#2e2334"/>
<rect x="247" y="187" width="4" height="4" fill="#3e3548"/>
<rect x="251" y="187" width="15" height="4" fill="#2e2334"/>
<rect x="266" y="187" width="8" height="4" fill="#3e3548"/>
<rect x="274" y="187" width="4" height="4" fill="#2e2334"/>
<rect x="278" y="187" width="8" height="4" fill="#63576c"/>
<rect x="286" y="187" width="4" height="4" fill="#2e2334"/>
<rect x="290" y="187" width="4" height="4" fill="#3e3548"/>
<rect x="294" y="187" width="4" height="4" fill="#2e2334"/>
<rect x="122" y="191" width="4" height="4" fill="#2e2334"/>
<rect x="126" y="191" width="15" height="4" fill="#63576c"/>
<rect x="141" y="191" width="8" height="4" fill="#2e2334"/>
<rect x="149" y="191" width="8" height="4" fill="#3e3548"/>
<rect x="157" y="191" width="8" height="4" fill="#63576c"/>
<rect x="165" y="191" width="8" height="4" fill="#2e2334"/>
<rect x="173" y="191" width="4" height="4" fill="#63576c"/>
<rect x="177" y="191" width="3" height="4" fill="#3e3548"/>
<rect x="180" y="191" width="4" height="4" fill="#63576c"/>
<rect x="184" y="191" width="4" height="4" fill="#2e2334"/>
<rect x="188" y="191" width="16" height="4" fill="#63576c"/>
<rect x="204" y="191" width="8" height="4" fill="#2e2334"/>
<rect x="212" y="191" width="7" height="4" fill="#3e3548"/>
<rect x="219" y="191" width="8" height="4" fill="#63576c"/>
<rect x="227" y="191" width="8" height="4" fill="#2e2334"/>
<rect x="235" y="191" width="4" height="4" fill="#63576c"/>
<rect x="239" y="191" width="4" height="4" fill="#3e3548"/>
<rect x="243" y="191" width="4" height="4" fill="#63576c"/>
<rect x="247" y="191" width="4" height="4" fill="#2e2334"/>
<rect x="251" y="191" width="15" height="4" fill="#63576c"/>
<rect x="266" y="191" width="8" height="4" fill="#2e2334"/>
<rect x="274" y="191" width="8" height="4" fill="#3e3548"/>
<rect x="282" y="191" width="8" height="4" fill="#63576c"/>
<rect x="290" y="191" width="4" height="4" fill="#2e2334"/>
<rect x="126" y="195" width="4" height="4" fill="#2e2334"/>
<rect x="130" y="195" width="4" height="4" fill="#63576c"/>
<rect x="134" y="195" width="3" height="4" fill="#3e3548"/>
<rect x="137" y="195" width="4" height="4" fill="#2e2334"/>
<rect x="141" y="195" width="8" height="4" fill="#63576c"/>
<rect x="149" y="195" width="4" height="4" fill="#2e2334"/>
<rect x="153" y="195" width="8" height="4" fill="#3e3548"/>
<rect x="161" y="195" width="4" height="4" fill="#2e2334"/>
<rect x="165" y="195" width="8" height="4" fill="#63576c"/>
<rect x="173" y="195" width="7" height="4" fill="#3e3548"/>
<rect x="180" y="195" width="4" height="4" fill="#2e2334"/>
<rect x="184" y="195" width="12" height="4" fill="#63576c"/>
<rect x="196" y="195" width="4" height="4" fill="#3e3548"/>
<rect x="200" y="195" width="4" height="4" fill="#2e2334"/>
<rect x="204" y="195" width="8" height="4" fill="#63576c"/>
<rect x="212" y="195" width="4" height="4" fill="#2e2334"/>
<rect x="216" y="195" width="7" height="4" fill="#3e3548"/>
<rect x="223" y="195" width="4" height="4" fill="#2e2334"/>
<rect x="227" y="195" width="8" height="4" fill="#63576c"/>
<rect x="235" y="195" width="8" height="4" fill="#3e3548"/>
<rect x="243" y="195" width="4" height="4" fill="#2e2334"/>
<rect x="247" y="195" width="12" height="4" fill="#63576c"/>
<rect x="259" y="195" width="3" height="4" fill="#3e3548"/>
<rect x="262" y="195" width="4" height="4" fill="#2e2334"/>
<rect x="266" y="195" width="8" height="4" fill="#63576c"/>
<rect x="274" y="195" width="4" height="4" fill="#2e2334"/>
<rect x="278" y="195" width="8" height="4" fill="#3e3548"/>
<rect x="286" y="195" width="4" height="4" fill="#2e2334"/>
<rect x="122" y="199" width="4" height="3" fill="#2e2334"/>
<rect x="126" y="199" width="8" height="3" fill="#3e3548"/>
<rect x="134" y="199" width="3" height="3" fill="#63576c"/>
<rect x="137" y="199" width="4" height="3" fill="#2e2334"/>
<rect x="141" y="199" width="4" height="3" fill="#3e3548"/>
<rect x="145" y="199" width="8" height="3" fill="#63576c"/>
<rect x="153" y="199" width="4" height="3" fill="#2e2334"/>
<rect x="157" y="199" width="4" height="3" fill="#3e3548"/>
<rect x="161" y="199" width="4" height="3" fill="#2e2334"/>
<rect x="165" y="199" width="15" height="3" fill="#3e3548"/>
<rect x="180" y="199" width="4" height="3" fill="#2e2334"/>
<rect x="184" y="199" width="4" height="3" fill="#63576c"/>
<rect x="188" y="199" width="8" height="3" fill="#3e3548"/>
<rect x="196" y="199" width="4" height="3" fill="#63576c"/>
<rect x="200" y="199" width="4" height="3" fill="#2e2334"/>
<rect x="204" y="199" width="4" height="3" fill="#3e3548"/>
<rect x="208" y="199" width="8" height="3" fill="#63576c"/>
<rect x="216" y="199" width="3" height="3" fill="#2e2334"/>
<rect x="219" y="199" width="4" height="3" fill="#3e3548"/>
<rect x="223" y="199" width="4" height="3" fill="#2e2334"/>
<rect x="227" y="199" width="16" height="3" fill="#3e3548"/>
<rect x="243" y="199" width="4" height="3" fill="#2e2334"/>
<rect x="247" y="199" width="4" height="3" fill="#63576c"/>
<rect x="251" y="199" width="8" height="3" fill="#3e3548"/>
<rect x="259" y="199" width="3" height="3" fill="#63576c"/>
<rect x="262" y="199" width="4" height="3" fill="#2e2334"/>
<rect x="266" y="199" width="4" height="3" fill="#3e3548"/>
<rect x="270" y="199" width="8" height="3" fill="#63576c"/>
<rect x="278" y="199" width="4" height="3" fill="#2e2334"/>
<rect x="282" y="199" width="4" height="3" fill="#3e3548"/>
<rect x="286" y="199" width="4" height="3" fill="#2e2334"/>
<rect x="122" y="202" width="4" height="4" fill="#2e2334"/>
<rect x="126" y="202" width="4" height="4" fill="#3e3548"/>
<rect x="130" y="202" width="7" height="4" fill="#2e2334"/>
<rect x="137" y="202" width="16" height="4" fill="#3e3548"/>
<rect x="153" y="202" width="4" height="4" fill="#63576c"/>
<rect x="157" y="202" width="4" height="4" fill="#2e2334"/>
<rect x="161" y="202" width="4" height="4" fill="#63576c"/>
<rect x="165" y="202" width="4" height="4" fill="#2e2334"/>
<rect x="169" y="202" width="4" height="4" fill="#3e3548"/>
<rect x="173" y="202" width="7" height="4" fill="#2e2334"/>
<rect x="180" y="202" width="12" height="4" fill="#3e3548"/>
<rect x="192" y="202" width="8" height="4" fill="#2e2334"/>
<rect x="200" y="202" width="16" height="4" fill="#3e3548"/>
<rect x="216" y="202" width="3" height="4" fill="#63576c"/>
<rect x="219" y="202" width="4" height="4" fill="#2e2334"/>
<rect x="223" y="202" width="4" height="4" fill="#63576c"/>
<rect x="227" y="202" width="4" height="4" fill="#2e2334"/>
<rect x="231" y="202" width="4" height="4" fill="#3e3548"/>
<rect x="235" y="202" width="8" height="4" fill="#2e2334"/>
<rect x="243" y="202" width="12" height="4" fill="#3e3548"/>
<rect x="255" y="202" width="7" height="4" fill="#2e2334"/>
<rect x="262" y="202" width="16" height="4" fill="#3e3548"/>
<rect x="278" y="202" width="4" height="4" fill="#63576c"/>
<rect x="282" y="202" width="4" height="4" fill="#2e2334"/>
<rect x="286" y="202" width="4" height="4" fill="#63576c"/>
<rect x="290" y="202" width="4" height="4" fill="#2e2334"/>
<rect x="126" y="206" width="4" height="4" fill="#2e2334"/>
<rect x="130" y="206" width="7" height="4" fill="#63576c"/>
<rect x="137" y="206" width="4" height="4" fill="#2e2334"/>
<rect x="141" y="206" width="4" height="4" fill="#3e3548"/>
<rect x="145" y="206" width="4" height="4" fill="#2e2334"/>
<rect x="149" y="206" width="4" height="4" fill="#3e3548"/>
<rect x="153" y="206" width="4" height="4" fill="#2e2334"/>
<rect x="157" y="206" width="12" height="4" fill="#63576c"/>
<rect x="169" y="206" width="4" height="4" fill="#2e2334"/>
<rect x="173" y="206" width="7" height="4" fill="#63576c"/>
<rect x="180" y="206" width="4" height="4" fill="#2e2334"/>
<rect x="184" y="206" width="4" height="4" fill="#3e3548"/>
<rect x="188" y="206" width="4" height="4" fill="#2e2334"/>
<rect x="192" y="206" width="8" height="4" fill="#63576c"/>
<rect x="200" y="206" width="4" height="4" fill="#2e2334"/>
<rect x="204" y="206" width="4" height="4" fill="#3e3548"/>
<rect x="208" y="206" width="4" height="4" fill="#2e2334"/>
<rect x="212" y="206" width="4" height="4" fill="#3e3548"/>
<rect x="216" y="206" width="3" height="4" fill="#2e2334"/>
<rect x="219" y="206" width="12" height="4" fill="#63576c"/>
<rect x="231" y="206" width="4" height="4" fill="#2e2334"/>
<rect x="235" y="206" width="8" height="4" fill="#63576c"/>
<rect x="243" y="206" width="4" height="4" fill="#2e2334"/>
<rect x="247" y="206" width="4" height="4" fill="#3e3548"/>
<rect x="251" y="206" width="4" height="4" fill="#2e2334"/>
<rect x="255" y="206" width="7" height="4" fill="#63576c"/>
<rect x="262" y="206" width="4" height="4" fill="#2e2334"/>
<rect x="266" y="206" width="4" height="4" fill="#3e3548"/>
<rect x="270" y="206" width="4" height="4" fill="#2e2334"/>
<rect x="274" y="206" width="4" height="4" fill="#3e3548"/>
<rect x="278" y="206" width="4" height="4" fill="#2e2334"/>
<rect x="282" y="206" width="12" height="4" fill="#63576c"/>
<rect x="294" y="206" width="4" height="4" fill="#2e2334"/>
<rect x="126" y="210" width="4" height="4" fill="#2e2334"/>
<rect x="130" y="210" width="7" height="4" fill="#3e3548"/>
<rect x="137" y="210" width="4" height="4" fill="#63576c"/>
<rect x="141" y="210" width="4" height="4" fill="#2e2334"/>
<rect x="145" y="210" width="4" height="4" fill="#63576c"/>
<rect x="149" y="210" width="8" height="4" fill="#2e2334"/>
<rect x="157" y="210" width="8" height="4" fill="#3e3548"/>
<rect x="165" y="210" width="4" height="4" fill="#63576c"/>
<rect x="169" y="210" width="4" height="4" fill="#2e2334"/>
<rect x="173" y="210" width="7" height="4" fill="#63576c"/>
<rect x="180" y="210" width="4" height="4" fill="#2e2334"/>
<rect x="184" y="210" width="4" height="4" fill="#3e3548"/>
<rect x="188" y="210" width="4" height="4" fill="#2e2334"/>
<rect x="192" y="210" width="8" height="4" fill="#3e3548"/>
<rect x="200" y="210" width="4" height="4" fill="#63576c"/>
<rect x="204" y="210" width="4" height="4" fill="#2e2334"/>
<rect x="208" y="210" width="4" height="4" fill="#63576c"/>
<rect x="212" y="210" width="7" height="4" fill="#2e2334"/>
<rect x="219" y="210" width="8" height="4" fill="#3e3548"/>
<rect x="227" y="210" width="4" height="4" fill="#63576c"/>
<rect x="231" y="210" width="4" height="4" fill="#2e2334"/>
<rect x="235" y="210" width="8" height="4" fill="#63576c"/>
<rect x="243" y="210" width="4" height="4" fill="#2e2334"/>
<rect x="247" y="210" width="4" height="4" fill="#3e3548"/>
<rect x="251" y="210" width="4" height="4" fill="#2e2334"/>
<rect x="255" y="210" width="7" height="4" fill="#3e3548"/>
<rect x="262" y="210" width="4" height="4" fill="#63576c"/>
<rect x="266" y="210" width="4" height="4" fill="#2e2334"/>
<rect x="270" y="210" width="4" height="4" fill="#63576c"/>
<rect x="274" y="210" width="8" height="4" fill="#2e2334"/>
<rect x="282" y="210" width="8" height="4" fill="#3e3548"/>
<rect x="290" y="210" width="4" height="4" fill="#63576c"/>
<rect x="294" y="210" width="4" height="4" fill="#2e2334"/>
<rect x="122" y="214" width="4" height="4" fill="#2e2334"/>
<rect x="126" y="214" width="4" height="4" fill="#63576c"/>
<rect x="130" y="214" width="4" height="4" fill="#2e2334"/>
<rect x="134" y="214" width="3" height="4" fill="#3e3548"/>
<rect x="137" y="214" width="4" height="4" fill="#2e2334"/>
<rect x="141" y="214" width="16" height="4" fill="#63576c"/>
<rect x="157" y="214" width="4" height="4" fill="#2e2334"/>
<rect x="161" y="214" width="8" height="4" fill="#3e3548"/>
<rect x="169" y="214" width="4" height="4" fill="#2e2334"/>
<rect x="173" y="214" width="7" height="4" fill="#3e3548"/>
<rect x="180" y="214" width="4" height="4" fill="#63576c"/>
<rect x="184" y="214" width="4" height="4" fill="#2e2334"/>
<rect x="188" y="214" width="4" height="4" fill="#63576c"/>
<rect x="192" y="214" width="4" height="4" fill="#2e2334"/>
<rect x="196" y="214" width="4" height="4" fill="#3e3548"/>
<rect x="200" y="214" width="4" height="4" fill="#2e2334"/>
<rect x="204" y="214" width="15" height="4" fill="#63576c"/>
<rect x="219" y="214" width="4" height="4" fill="#2e2334"/>
<rect x="223" y="214" width="8" height="4" fill="#3e3548"/>
<rect x="231" y="214" width="4" height="4" fill="#2e2334"/>
<rect x="235" y="214" width="8" height="4" fill="#3e3548"/>
<rect x="243" y="214" width="4" height="4" fill="#63576c"/>
<rect x="247" y="214" width="4" height="4" fill="#2e2334"/>
<rect x="251" y="214" width="4" height="4" fill="#63576c"/>
<rect x="255" y="214" width="4" height="4" fill="#2e2334"/>
<rect x="259" y="214" width="3" height="4" fill="#3e3548"/>
<rect x="262" y="214" width="4" height="4" fill="#2e2334"/>
<rect x="266" y="214" width="16" height="4" fill="#63576c"/>
<rect x="282" y="214" width="4" height="4" fill="#2e2334"/>
<rect x="286" y="214" width="8" height="4" fill="#3e3548"/>
<rect x="294" y="214" width="4" height="4" fill="#2e2334"/>
<rect x="118" y="218" width="4" height="4" fill="#2e2334"/>
<rect x="122" y="218" width="12" height="4" fill="#63576c"/>
<rect x="134" y="218" width="3" height="4" fill="#2e2334"/>
<rect x="137" y="218" width="4" height="4" fill="#63576c"/>
<rect x="141" y="218" width="8" height="4" fill="#3e3548"/>
<rect x="149" y="218" width="4" height="4" fill="#63576c"/>
<rect x="153" y="218" width="4" height="4" fill="#2e2334"/>
<rect x="157" y="218" width="4" height="4" fill="#63576c"/>
<rect x="161" y="218" width="8" height="4" fill="#2e2334"/>
<rect x="169" y="218" width="11" height="4" fill="#3e3548"/>
<rect x="180" y="218" width="4" height="4" fill="#2e2334"/>
<rect x="184" y="218" width="12" height="4" fill="#63576c"/>
<rect x="196" y="218" width="4" height="4" fill="#2e2334"/>
<rect x="200" y="218" width="4" height="4" fill="#63576c"/>
<rect x="204" y="218" width="8" height="4" fill="#3e3548"/>
<rect x="212" y="218" width="4" height="4" fill="#63576c"/>
<rect x="216" y="218" width="3" height="4" fill="#2e2334"/>
<rect x="219" y="218" width="4" height="4" fill="#63576c"/>
<rect x="223" y="218" width="8" height="4" fill="#2e2334"/>
<rect x="231" y="218" width="12" height="4" fill="#3e3548"/>
<rect x="243" y="218" width="4" height="4" fill="#2e2334"/>
<rect x="247" y="218" width="12" height="4" fill="#63576c"/>
<rect x="259" y="218" width="3" height="4" fill="#2e2334"/>
<rect x="262" y="218" width="4" height="4" fill="#63576c"/>
<rect x="266" y="218" width="8" height="4" fill="#3e3548"/>
<rect x="274" y="218" width="4" height="4" fill="#63576c"/>
<rect x="278" y="218" width="4" height="4" fill="#2e2334"/>
<rect x="282" y="218" width="4" height="4" fill="#63576c"/>
<rect x="286" y="218" width="8" height="4" fill="#2e2334"/>
<rect x="118" y="222" width="4" height="4" fill="#2e2334"/>
<rect x="122" y="222" width="8" height="4" fill="#3e3548"/>
<rect x="130" y="222" width="7" height="4" fill="#63576c"/>
<rect x="137" y="222" width="4" height="4" fill="#2e2334"/>
<rect x="141" y="222" width="12" height="4" fill="#3e3548"/>
<rect x="153" y="222" width="4" height="4" fill="#2e2334"/>
<rect x="157" y="222" width="12" height="4" fill="#63576c"/>
<rect x="169" y="222" width="4" height="4" fill="#2e2334"/>
<rect x="173" y="222" width="7" height="4" fill="#3e3548"/>
<rect x="180" y="222" width="4" height="4" fill="#2e2334"/>
<rect x="184" y="222" width="8" height="4" fill="#3e3548"/>
<rect x="192" y="222" width="8" height="4" fill="#63576c"/>
<rect x="200" y="222" width="4" height="4" fill="#2e2334"/>
<rect x="204" y="222" width="12" height="4" fill="#3e3548"/>
<rect x="216" y="222" width="3" height="4" fill="#2e2334"/>
<rect x="219" y="222" width="12" height="4" fill="#63576c"/>
<rect x="231" y="222" width="4" height="4" fill="#2e2334"/>
<rect x="235" y="222" width="8" height="4" fill="#3e3548"/>
<rect x="243" y="222" width="4" height="4" fill="#2e2334"/>
<rect x="247" y="222" width="8" height="4" fill="#3e3548"/>
<rect x="255" y="222" width="7" height="4" fill="#63576c"/>
<rect x="262" y="222" width="4" height="4" fill="#2e2334"/>
<rect x="266" y="222" width="12" height="4" fill="#3e3548"/>
<rect x="278" y="222" width="4" height="4" fill="#2e2334"/>
<rect x="282" y="222" width="12" height="4" fill="#63576c"/>
<rect x="294" y="222" width="4" height="4" fill="#2e2334"/>
<rect x="118" y="226" width="4" height="4" fill="#2e2334"/>
<rect x="122" y="226" width="12" height="4" fill="#3e3548"/>
<rect x="134" y="226" width="3" height="4" fill="#2e2334"/>
<rect x="137" y="226" width="4" height="4" fill="#63576c"/>
<rect x="141" y="226" width="8" height="4" fill="#2e2334"/>
<rect x="149" y="226" width="4" height="4" fill="#3e3548"/>
<rect x="153" y="226" width="4" height="4" fill="#63576c"/>
<rect x="157" y="226" width="4" height="4" fill="#2e2334"/>
<rect x="161" y="226" width="4" height="4" fill="#3e3548"/>
<rect x="165" y="226" width="8" height="4" fill="#63576c"/>
<rect x="173" y="226" width="7" height="4" fill="#2e2334"/>
<rect x="180" y="226" width="16" height="4" fill="#3e3548"/>
<rect x="196" y="226" width="4" height="4" fill="#2e2334"/>
<rect x="200" y="226" width="4" height="4" fill="#63576c"/>
<rect x="204" y="226" width="8" height="4" fill="#2e2334"/>
<rect x="212" y="226" width="4" height="4" fill="#3e3548"/>
<rect x="216" y="226" width="3" height="4" fill="#63576c"/>
<rect x="219" y="226" width="4" height="4" fill="#2e2334"/>
<rect x="223" y="226" width="4" height="4" fill="#3e3548"/>
<rect x="227" y="226" width="8" height="4" fill="#63576c"/>
<rect x="235" y="226" width="8" height="4" fill="#2e2334"/>
<rect x="243" y="226" width="16" height="4" fill="#3e3548"/>
<rect x="259" y="226" width="3" height="4" fill="#2e2334"/>
<rect x="262" y="226" width="4" height="4" fill="#63576c"/>
<rect x="266" y="226" width="8" height="4" fill="#2e2334"/>
<rect x="274" y="226" width="4" height="4" fill="#3e3548"/>
<rect x="278" y="226" width="4" height="4" fill="#63576c"/>
<rect x="282" y="226" width="4" height="4" fill="#2e2334"/>
<rect x="286" y="226" width="4" height="4" fill="#3e3548"/>
<rect x="290" y="226" width="4" height="4" fill="#63576c"/>
<rect x="294" y="226" width="4" height="4" fill="#2e2334"/>
<rect x="122" y="230" width="4" height="4" fill="#2e2334"/>
<rect x="126" y="230" width="4" height="4" fill="#3e3548"/>
<rect x="130" y="230" width="4" height="4" fill="#2e2334"/>
<rect x="134" y="230" width="15" height="4" fill="#63576c"/>
<rect x="149" y="230" width="4" height="4" fill="#2e2334"/>
<rect x="153" y="230" width="4" height="4" fill="#3e3548"/>
<rect x="157" y="230" width="4" height="4" fill="#2e2334"/>
<rect x="161" y="230" width="8" height="4" fill="#3e3548"/>
<rect x="169" y="230" width="4" height="4" fill="#2e2334"/>
<rect x="173" y="230" width="7" height="4" fill="#63576c"/>
<rect x="180" y="230" width="8" height="4" fill="#2e2334"/>
<rect x="188" y="230" width="4" height="4" fill="#3e3548"/>
<rect x="192" y="230" width="4" height="4" fill="#2e2334"/>
<rect x="196" y="230" width="16" height="4" fill="#63576c"/>
<rect x="212" y="230" width="4" height="4" fill="#2e2334"/>
<rect x="216" y="230" width="3" height="4" fill="#3e3548"/>
<rect x="219" y="230" width="4" height="4" fill="#2e2334"/>
<rect x="223" y="230" width="8" height="4" fill="#3e3548"/>
<rect x="231" y="230" width="4" height="4" fill="#2e2334"/>
<rect x="235" y="230" width="8" height="4" fill="#63576c"/>
<rect x="243" y="230" width="8" height="4" fill="#2e2334"/>
<rect x="251" y="230" width="4" height="4" fill="#3e3548"/>
<rect x="255" y="230" width="4" height="4" fill="#2e2334"/>
<rect x="259" y="230" width="15" height="4" fill="#63576c"/>
<rect x="274" y="230" width="4" height="4" fill="#2e2334"/>
<rect x="278" y="230" width="4" height="4" fill="#3e3548"/>
<rect x="282" y="230" width="4" height="4" fill="#2e2334"/>
<rect x="286" y="230" width="4" height="4" fill="#3e3548"/>
<rect x="290" y="230" width="4" height="4" fill="#2e2334"/>
<rect x="126" y="234" width="4" height="4" fill="#2e2334"/>
<rect x="130" y="234" width="11" height="4" fill="#3e3548"/>
<rect x="141" y="234" width="4" height="4" fill="#63576c"/>
<rect x="145" y="234" width="4" height="4" fill="#2e2334"/>
<rect x="149" y="234" width="4" height="4" fill="#63576c"/>
<rect x="153" y="234" width="4" height="4" fill="#2e2334"/>
<rect x="157" y="234" width="8" height="4" fill="#3e3548"/>
<rect x="165" y="234" width="4" height="4" fill="#2e2334"/>
<rect x="169" y="234" width="8" height="4" fill="#63576c"/>
<rect x="177" y="234" width="3" height="4" fill="#3e3548"/>
<rect x="180" y="234" width="8" height="4" fill="#63576c"/>
<rect x="188" y="234" width="4" height="4" fill="#2e2334"/>
<rect x="192" y="234" width="12" height="4" fill="#3e3548"/>
<rect x="204" y="234" width="4" height="4" fill="#63576c"/>
<rect x="208" y="234" width="4" height="4" fill="#2e2334"/>
<rect x="212" y="234" width="4" height="4" fill="#63576c"/>
<rect x="216" y="234" width="3" height="4" fill="#2e2334"/>
<rect x="219" y="234" width="8" height="4" fill="#3e3548"/>
<rect x="227" y="234" width="4" height="4" fill="#2e2334"/>
<rect x="231" y="234" width="8" height="4" fill="#63576c"/>
<rect x="239" y="234" width="4" height="4" fill="#3e3548"/>
<rect x="243" y="234" width="8" height="4" fill="#63576c"/>
<rect x="251" y="234" width="4" height="4" fill="#2e2334"/>
<rect x="255" y="234" width="11" height="4" fill="#3e3548"/>
<rect x="266" y="234" width="4" height="4" fill="#63576c"/>
<rect x="270" y="234" width="4" height="4" fill="#2e2334"/>
<rect x="274" y="234" width="4" height="4" fill="#63576c"/>
<rect x="278" y="234" width="4" height="4" fill="#2e2334"/>
<rect x="282" y="234" width="8" height="4" fill="#3e3548"/>
<rect x="290" y="234" width="4" height="4" fill="#2e2334"/>
<rect x="126" y="238" width="11" height="4" fill="#2e2334"/>
<rect x="137" y="238" width="4" height="4" fill="#3e3548"/>
<rect x="141" y="238" width="4" height="4" fill="#2e2334"/>
<rect x="145" y="238" width="12" height="4" fill="#63576c"/>
<rect x="157" y="238" width="4" height="4" fill="#2e2334"/>
<rect x="161" y="238" width="4" height="4" fill="#3e3548"/>
<rect x="165" y="238" width="4" height="4" fill="#2e2334"/>
<rect x="169" y="238" width="19" height="4" fill="#3e3548"/>
<rect x="188" y="238" width="12" height="4" fill="#2e2334"/>
<rect x="200" y="238" width="4" height="4" fill="#3e3548"/>
<rect x="204" y="238" width="4" height="4" fill="#2e2334"/>
<rect x="208" y="238" width="11" height="4" fill="#63576c"/>
<rect x="219" y="238" width="4" height="4" fill="#2e2334"/>
<rect x="223" y="238" width="4" height="4" fill="#3e3548"/>
<rect x="227" y="238" width="4" height="4" fill="#2e2334"/>
<rect x="231" y="238" width="20" height="4" fill="#3e3548"/>
<rect x="251" y="238" width="11" height="4" fill="#2e2334"/>
<rect x="262" y="238" width="4" height="4" fill="#3e3548"/>
<rect x="266" y="238" width="4" height="4" fill="#2e2334"/>
<rect x="270" y="238" width="12" height="4" fill="#63576c"/>
<rect x="282" y="238" width="4" height="4" fill="#2e2334"/>
<rect x="286" y="238" width="4" height="4" fill="#3e3548"/>
<rect x="290" y="238" width="4" height="4" fill="#2e2334"/>
<rect x="122" y="242" width="4" height="3" fill="#2e2334"/>
<rect x="126" y="242" width="11" height="3" fill="#63576c"/>
<rect x="137" y="242" width="4" height="3" fill="#2e2334"/>
<rect x="141" y="242" width="4" height="3" fill="#63576c"/>
<rect x="145" y="242" width="4" height="3" fill="#3e3548"/>
<rect x="149" y="242" width="12" height="3" fill="#63576c"/>
<rect x="161" y="242" width="4" height="3" fill="#2e2334"/>
<rect x="165" y="242" width="4" height="3" fill="#63576c"/>
<rect x="169" y="242" width="4" height="3" fill="#2e2334"/>
<rect x="173" y="242" width="7" height="3" fill="#3e3548"/>
<rect x="180" y="242" width="8" height="3" fill="#2e2334"/>
<rect x="188" y="242" width="12" height="3" fill="#63576c"/>
<rect x="200" y="242" width="4" height="3" fill="#2e2334"/>
<rect x="204" y="242" width="4" height="3" fill="#63576c"/>
<rect x="208" y="242" width="4" height="3" fill="#3e3548"/>
<rect x="212" y="242" width="11" height="3" fill="#63576c"/>
<rect x="223" y="242" width="4" height="3" fill="#2e2334"/>
<rect x="227" y="242" width="4" height="3" fill="#63576c"/>
<rect x="231" y="242" width="4" height="3" fill="#2e2334"/>
<rect x="235" y="242" width="8" height="3" fill="#3e3548"/>
<rect x="243" y="242" width="8" height="3" fill="#2e2334"/>
<rect x="251" y="242" width="11" height="3" fill="#63576c"/>
<rect x="262" y="242" width="4" height="3" fill="#2e2334"/>
<rect x="266" y="242" width="4" height="3" fill="#63576c"/>
<rect x="270" y="242" width="4" height="3" fill="#3e3548"/>
<rect x="274" y="242" width="12" height="3" fill="#63576c"/>
<rect x="286" y="242" width="4" height="3" fill="#2e2334"/>
<rect x="290" y="242" width="4" height="3" fill="#63576c"/>
<rect x="294" y="242" width="4" height="3" fill="#2e2334"/>
<rect x="122" y="245" width="4" height="4" fill="#2e2334"/>
<rect x="126" y="245" width="4" height="4" fill="#3e3548"/>
<rect x="130" y="245" width="4" height="4" fill="#63576c"/>
<rect x="134" y="245" width="3" height="4" fill="#2e2334"/>
<rect x="137" y="245" width="16" height="4" fill="#3e3548"/>
<rect x="153" y="245" width="8" height="4" fill="#2e2334"/>
<rect x="161" y="245" width="4" height="4" fill="#3e3548"/>
<rect x="165" y="245" width="8" height="4" fill="#63576c"/>
<rect x="173" y="245" width="7" height="4" fill="#2e2334"/>
<rect x="180" y="245" width="12" height="4" fill="#3e3548"/>
<rect x="192" y="245" width="4" height="4" fill="#63576c"/>
<rect x="196" y="245" width="4" height="4" fill="#2e2334"/>
<rect x="200" y="245" width="16" height="4" fill="#3e3548"/>
<rect x="216" y="245" width="7" height="4" fill="#2e2334"/>
<rect x="223" y="245" width="4" height="4" fill="#3e3548"/>
<rect x="227" y="245" width="8" height="4" fill="#63576c"/>
<rect x="235" y="245" width="8" height="4" fill="#2e2334"/>
<rect x="243" y="245" width="12" height="4" fill="#3e3548"/>
<rect x="255" y="245" width="4" height="4" fill="#63576c"/>
<rect x="259" y="245" width="3" height="4" fill="#2e2334"/>
<rect x="262" y="245" width="16" height="4" fill="#3e3548"/>
<rect x="278" y="245" width="8" height="4" fill="#2e2334"/>
<rect x="286" y="245" width="4" height="4" fill="#3e3548"/>
<rect x="290" y="245" width="4" height="4" fill="#63576c"/>
<rect x="294" y="245" width="4" height="4" fill="#2e2334"/>
<rect x="126" y="249" width="15" height="4" fill="#2e2334"/>
<rect x="141" y="249" width="8" height="4" fill="#3e3548"/>
<rect x="149" y="249" width="4" height="4" fill="#2e2334"/>
<rect x="153" y="249" width="8" height="4" fill="#63576c"/>
<rect x="161" y="249" width="4" height="4" fill="#2e2334"/>
<rect x="165" y="249" width="8" height="4" fill="#3e3548"/>
<rect x="173" y="249" width="4" height="4" fill="#2e2334"/>
<rect x="177" y="249" width="3" height="4" fill="#63576c"/>
<rect x="180" y="249" width="4" height="4" fill="#2e2334"/>
<rect x="184" y="249" width="4" height="4" fill="#3e3548"/>
<rect x="188" y="249" width="16" height="4" fill="#2e2334"/>
<rect x="204" y="249" width="8" height="4" fill="#3e3548"/>
<rect x="212" y="249" width="4" height="4" fill="#2e2334"/>
<rect x="216" y="249" width="7" height="4" fill="#63576c"/>
<rect x="223" y="249" width="4" height="4" fill="#2e2334"/>
<rect x="227" y="249" width="8" height="4" fill="#3e3548"/>
<rect x="235" y="249" width="4" height="4" fill="#2e2334"/>
<rect x="239" y="249" width="4" height="4" fill="#63576c"/>
<rect x="243" y="249" width="4" height="4" fill="#2e2334"/>
<rect x="247" y="249" width="4" height="4" fill="#3e3548"/>
<rect x="251" y="249" width="15" height="4" fill="#2e2334"/>
<rect x="266" y="249" width="8" height="4" fill="#3e3548"/>
<rect x="274" y="249" width="4" height="4" fill="#2e2334"/>
<rect x="278" y="249" width="8" height="4" fill="#63576c"/>
<rect x="286" y="249" width="4" height="4" fill="#2e2334"/>
<rect x="290" y="249" width="4" height="4" fill="#3e3548"/>
<rect x="294" y="249" width="4" height="4" fill="#2e2334"/>
<rect x="122" y="253" width="4" height="4" fill="#2e2334"/>
<rect x="126" y="253" width="15" height="4" fill="#63576c"/>
<rect x="141" y="253" width="8" height="4" fill="#2e2334"/>
<rect x="149" y="253" width="8" height="4" fill="#3e3548"/>
<rect x="157" y="253" width="8" height="4" fill="#63576c"/>
<rect x="165" y="253" width="8" height="4" fill="#2e2334"/>
<rect x="173" y="253" width="4" height="4" fill="#63576c"/>
<rect x="177" y="253" width="3" height="4" fill="#3e3548"/>
<rect x="180" y="253" width="4" height="4" fill="#63576c"/>
<rect x="184" y="253" width="4" height="4" fill="#2e2334"/>
<rect x="188" y="253" width="16" height="4" fill="#63576c"/>
<rect x="204" y="253" width="8" height="4" fill="#2e2334"/>
<rect x="212" y="253" width="7" height="4" fill="#3e3548"/>
<rect x="219" y="253" width="8" height="4" fill="#63576c"/>
<rect x="227" y="253" width="8" height="4" fill="#2e2334"/>
<rect x="235" y="253" width="4" height="4" fill="#63576c"/>
<rect x="239" y="253" width="4" height="4" fill="#3e3548"/>
<rect x="243" y="253" width="4" height="4" fill="#63576c"/>
<rect x="247" y="253" width="4" height="4" fill="#2e2334"/>
<rect x="251" y="253" width="15" height="4" fill="#63576c"/>
<rect x="266" y="253" width="8" height="4" fill="#2e2334"/>
<rect x="274" y="253" width="8" height="4" fill="#3e3548"/>
<rect x="282" y="253" width="8" height="4" fill="#63576c"/>
<rect x="290" y="253" width="4" height="4" fill="#2e2334"/>
<rect x="118" y="257" width="4" height="4" fill="#2e2334"/>
<rect x="122" y="257" width="12" height="4" fill="#63576c"/>
<rect x="134" y="257" width="3" height="4" fill="#3e3548"/>
<rect x="137" y="257" width="4" height="4" fill="#2e2334"/>
<rect x="141" y="257" width="8" height="4" fill="#63576c"/>
<rect x="149" y="257" width="4" height="4" fill="#2e2334"/>
<rect x="153" y="257" width="8" height="4" fill="#3e3548"/>
<rect x="161" y="257" width="4" height="4" fill="#2e2334"/>
<rect x="165" y="257" width="8" height="4" fill="#63576c"/>
<rect x="173" y="257" width="7" height="4" fill="#3e3548"/>
<rect x="180" y="257" width="4" height="4" fill="#2e2334"/>
<rect x="184" y="257" width="12" height="4" fill="#63576c"/>
<rect x="196" y="257" width="4" height="4" fill="#3e3548"/>
<rect x="200" y="257" width="4" height="4" fill="#2e2334"/>
<rect x="204" y="257" width="8" height="4" fill="#63576c"/>
<rect x="212" y="257" width="4" height="4" fill="#2e2334"/>
<rect x="216" y="257" width="7" height="4" fill="#3e3548"/>
<rect x="223" y="257" width="4" height="4" fill="#2e2334"/>
<rect x="227" y="257" width="8" height="4" fill="#63576c"/>
<rect x="235" y="257" width="8" height="4" fill="#3e3548"/>
<rect x="243" y="257" width="4" height="4" fill="#2e2334"/>
<rect x="247" y="257" width="12" height="4" fill="#63576c"/>
<rect x="259" y="257" width="3" height="4" fill="#3e3548"/>
<rect x="262" y="257" width="4" height="4" fill="#2e2334"/>
<rect x="266" y="257" width="8" height="4" fill="#63576c"/>
<rect x="274" y="257" width="4" height="4" fill="#2e2334"/>
<rect x="278" y="257" width="8" height="4" fill="#3e3548"/>
<rect x="286" y="257" width="4" height="4" fill="#2e2334"/>
<rect x="118" y="261" width="4" height="4" fill="#2e2334"/>
<rect x="122" y="261" width="4" height="4" fill="#63576c"/>
<rect x="126" y="261" width="8" height="4" fill="#3e3548"/>
<rect x="134" y="261" width="3" height="4" fill="#63576c"/>
<rect x="137" y="261" width="4" height="4" fill="#2e2334"/>
<rect x="141" y="261" width="4" height="4" fill="#3e3548"/>
<rect x="145" y="261" width="8" height="4" fill="#63576c"/>
<rect x="153" y="261" width="4" height="4" fill="#2e2334"/>
<rect x="157" y="261" width="4" height="4" fill="#3e3548"/>
<rect x="161" y="261" width="4" height="4" fill="#2e2334"/>
<rect x="165" y="261" width="15" height="4" fill="#3e3548"/>
<rect x="180" y="261" width="4" height="4" fill="#2e2334"/>
<rect x="184" y="261" width="4" height="4" fill="#63576c"/>
<rect x="188" y="261" width="8" height="4" fill="#3e3548"/>
<rect x="196" y="261" width="4" height="4" fill="#63576c"/>
<rect x="200" y="261" width="4" height="4" fill="#2e2334"/>
<rect x="204" y="261" width="4" height="4" fill="#3e3548"/>
<rect x="208" y="261" width="8" height="4" fill="#63576c"/>
<rect x="216" y="261" width="3" height="4" fill="#2e2334"/>
<rect x="219" y="261" width="4" height="4" fill="#3e3548"/>
<rect x="223" y="261" width="4" height="4" fill="#2e2334"/>
<rect x="227" y="261" width="16" height="4" fill="#3e3548"/>
<rect x="243" y="261" width="4" height="4" fill="#2e2334"/>
<rect x="247" y="261" width="4" height="4" fill="#63576c"/>
<rect x="251" y="261" width="8" height="4" fill="#3e3548"/>
<rect x="259" y="261" width="3" height="4" fill="#63576c"/>
<rect x="262" y="261" width="4" height="4" fill="#2e2334"/>
<rect x="266" y="261" width="4" height="4" fill="#3e3548"/>
<rect x="270" y="261" width="8" height="4" fill="#63576c"/>
<rect x="278" y="261" width="4" height="4" fill="#2e2334"/>
<rect x="282" y="261" width="4" height="4" fill="#3e3548"/>
<rect x="286" y="261" width="4" height="4" fill="#2e2334"/>
<rect x="122" y="265" width="4" height="4" fill="#2e2334"/>
<rect x="126" y="265" width="4" height="4" fill="#3e3548"/>
<rect x="130" y="265" width="7" height="4" fill="#2e2334"/>
<rect x="137" y="265" width="16" height="4" fill="#3e3548"/>
<rect x="153" y="265" width="4" height="4" fill="#63576c"/>
<rect x="157" y="265" width="4" height="4" fill="#2e2334"/>
<rect x="161" y="265" width="4" height="4" fill="#63576c"/>
<rect x="165" y="265" width="4" height="4" fill="#2e2334"/>
<rect x="169" y="265" width="4" height="4" fill="#3e3548"/>
<rect x="173" y="265" width="7" height="4" fill="#2e2334"/>
<rect x="180" y="265" width="12" height="4" fill="#3e3548"/>
<rect x="192" y="265" width="8" height="4" fill="#2e2334"/>
<rect x="200" y="265" width="16" height="4" fill="#3e3548"/>
<rect x="216" y="265" width="3" height="4" fill="#63576c"/>
<rect x="219" y="265" width="4" height="4" fill="#2e2334"/>
<rect x="223" y="265" width="4" height="4" fill="#63576c"/>
<rect x="227" y="265" width="4" height="4" fill="#2e2334"/>
<rect x="231" y="265" width="4" height="4" fill="#3e3548"/>
<rect x="235" y="265" width="8" height="4" fill="#2e2334"/>
<rect x="243" y="265" width="12" height="4" fill="#3e3548"/>
<rect x="255" y="265" width="7" height="4" fill="#2e2334"/>
<rect x="262" y="265" width="16" height="4" fill="#3e3548"/>
<rect x="278" y="265" width="4" height="4" fill="#63576c"/>
<rect x="282" y="265" width="4" height="4" fill="#2e2334"/>
<rect x="286" y="265" width="4" height="4" fill="#63576c"/>
<rect x="290" y="265" width="4" height="4" fill="#2e2334"/>
<rect x="126" y="269" width="4" height="4" fill="#2e2334"/>
<rect x="130" y="269" width="7" height="4" fill="#63576c"/>
<rect x="137" y="269" width="4" height="4" fill="#2e2334"/>
<rect x="141" y="269" width="4" height="4" fill="#3e3548"/>
<rect x="145" y="269" width="4" height="4" fill="#2e2334"/>
<rect x="149" y="269" width="4" height="4" fill="#3e3548"/>
<rect x="153" y="269" width="4" height="4" fill="#2e2334"/>
<rect x="157" y="269" width="12" height="4" fill="#63576c"/>
<rect x="169" y="269" width="4" height="4" fill="#2e2334"/>
<rect x="173" y="269" width="7" height="4" fill="#63576c"/>
<rect x="180" y="269" width="4" height="4" fill="#2e2334"/>
<rect x="184" y="269" width="4" height="4" fill="#3e3548"/>
<rect x="188" y="269" width="4" height="4" fill="#2e2334"/>
<rect x="192" y="269" width="8" height="4" fill="#63576c"/>
<rect x="200" y="269" width="4" height="4" fill="#2e2334"/>
<rect x="204" y="269" width="4" height="4" fill="#3e3548"/>
<rect x="208" y="269" width="4" height="4" fill="#2e2334"/>
<rect x="212" y="269" width="4" height="4" fill="#3e3548"/>
<rect x="216" y="269" width="3" height="4" fill="#2e2334"/>
<rect x="219" y="269" width="12" height="4" fill="#63576c"/>
<rect x="231" y="269" width="4" height="4" fill="#2e2334"/>
<rect x="235" y="269" width="8" height="4" fill="#63576c"/>
<rect x="243" y="269" width="4" height="4" fill="#2e2334"/>
<rect x="247" y="269" width="4" height="4" fill="#3e3548"/>
<rect x="251" y="269" width="4" height="4" fill="#2e2334"/>
<rect x="255" y="269" width="7" height="4" fill="#63576c"/>
<rect x="262" y="269" width="4" height="4" fill="#2e2334"/>
<rect x="266" y="269" width="4" height="4" fill="#3e3548"/>
<rect x="270" y="269" width="4" height="4" fill="#2e2334"/>
<rect x="274" y="269" width="4" height="4" fill="#3e3548"/>
<rect x="278" y="269" width="4" height="4" fill="#2e2334"/>
<rect x="282" y="269" width="8" height="4" fill="#63576c"/>
<rect x="290" y="269" width="4" height="4" fill="#2e2334"/>
<rect x="126" y="273" width="4" height="4" fill="#2e2334"/>
<rect x="130" y="273" width="7" height="4" fill="#3e3548"/>
<rect x="137" y="273" width="4" height="4" fill="#63576c"/>
<rect x="141" y="273" width="4" height="4" fill="#2e2334"/>
<rect x="145" y="273" width="4" height="4" fill="#63576c"/>
<rect x="149" y="273" width="8" height="4" fill="#2e2334"/>
<rect x="157" y="273" width="8" height="4" fill="#3e3548"/>
<rect x="165" y="273" width="4" height="4" fill="#63576c"/>
<rect x="169" y="273" width="4" height="4" fill="#2e2334"/>
<rect x="173" y="273" width="7" height="4" fill="#63576c"/>
<rect x="180" y="273" width="4" height="4" fill="#2e2334"/>
<rect x="184" y="273" width="4" height="4" fill="#3e3548"/>
<rect x="188" y="273" width="4" height="4" fill="#2e2334"/>
<rect x="192" y="273" width="8" height="4" fill="#3e3548"/>
<rect x="200" y="273" width="4" height="4" fill="#63576c"/>
<rect x="204" y="273" width="4" height="4" fill="#2e2334"/>
<rect x="208" y="273" width="4" height="4" fill="#63576c"/>
<rect x="212" y="273" width="7" height="4" fill="#2e2334"/>
<rect x="219" y="273" width="8" height="4" fill="#3e3548"/>
<rect x="227" y="273" width="4" height="4" fill="#63576c"/>
<rect x="231" y="273" width="4" height="4" fill="#2e2334"/>
<rect x="235" y="273" width="8" height="4" fill="#63576c"/>
<rect x="243" y="273" width="4" height="4" fill="#2e2334"/>
<rect x="247" y="273" width="4" height="4" fill="#3e3548"/>
<rect x="251" y="273" width="4" height="4" fill="#2e2334"/>
<rect x="255" y="273" width="7" height="4" fill="#3e3548"/>
<rect x="262" y="273" width="4" height="4" fill="#63576c"/>
<rect x="266" y="273" width="4" height="4" fill="#2e2334"/>
<rect x="270" y="273" width="4" height="4" fill="#63576c"/>
<rect x="274" y="273" width="8" height="4" fill="#2e2334"/>
<rect x="282" y="273" width="4" height="4" fill="#3e3548"/>
<rect x="286" y="273" width="4" height="4" fill="#2e2334"/>
<rect x="126" y="277" width="4" height="4" fill="#2e2334"/>
<rect x="130" y="277" width="7" height="4" fill="#3e3548"/>
<rect x="137" y="277" width="4" height="4" fill="#2e2334"/>
<rect x="141" y="277" width="16" height="4" fill="#63576c"/>
<rect x="157" y="277" width="4" height="4" fill="#2e2334"/>
<rect x="161" y="277" width="8" height="4" fill="#3e3548"/>
<rect x="169" y="277" width="4" height="4" fill="#2e2334"/>
<rect x="173" y="277" width="7" height="4" fill="#3e3548"/>
<rect x="180" y="277" width="4" height="4" fill="#63576c"/>
<rect x="184" y="277" width="4" height="4" fill="#2e2334"/>
<rect x="188" y="277" width="4" height="4" fill="#63576c"/>
<rect x="192" y="277" width="4" height="4" fill="#2e2334"/>
<rect x="196" y="277" width="4" height="4" fill="#3e3548"/>
<rect x="200" y="277" width="4" height="4" fill="#2e2334"/>
<rect x="204" y="277" width="15" height="4" fill="#63576c"/>
<rect x="219" y="277" width="4" height="4" fill="#2e2334"/>
<rect x="223" y="277" width="8" height="4" fill="#3e3548"/>
<rect x="231" y="277" width="4" height="4" fill="#2e2334"/>
<rect x="235" y="277" width="8" height="4" fill="#3e3548"/>
<rect x="243" y="277" width="4" height="4" fill="#63576c"/>
<rect x="247" y="277" width="4" height="4" fill="#2e2334"/>
<rect x="251" y="277" width="4" height="4" fill="#63576c"/>
<rect x="255" y="277" width="4" height="4" fill="#2e2334"/>
<rect x="259" y="277" width="3" height="4" fill="#3e3548"/>
<rect x="262" y="277" width="4" height="4" fill="#2e2334"/>
<rect x="266" y="277" width="16" height="4" fill="#63576c"/>
<rect x="282" y="277" width="4" height="4" fill="#2e2334"/>
<rect x="130" y="281" width="7" height="4" fill="#2e2334"/>
<rect x="137" y="281" width="4" height="4" fill="#63576c"/>
<rect x="141" y="281" width="8" height="4" fill="#3e3548"/>
<rect x="149" y="281" width="4" height="4" fill="#63576c"/>
<rect x="153" y="281" width="4" height="4" fill="#2e2334"/>
<rect x="157" y="281" width="4" height="4" fill="#63576c"/>
<rect x="161" y="281" width="8" height="4" fill="#2e2334"/>
<rect x="169" y="281" width="11" height="4" fill="#3e3548"/>
<rect x="180" y="281" width="4" height="4" fill="#2e2334"/>
<rect x="184" y="281" width="12" height="4" fill="#63576c"/>
<rect x="196" y="281" width="4" height="4" fill="#2e2334"/>
<rect x="200" y="281" width="4" height="4" fill="#63576c"/>
<rect x="204" y="281" width="8" height="4" fill="#3e3548"/>
<rect x="212" y="281" width="4" height="4" fill="#63576c"/>
<rect x="216" y="281" width="3" height="4" fill="#2e2334"/>
<rect x="219" y="281" width="4" height="4" fill="#63576c"/>
<rect x="223" y="281" width="8" height="4" fill="#2e2334"/>
<rect x="231" y="281" width="12" height="4" fill="#3e3548"/>
<rect x="243" y="281" width="4" height="4" fill="#2e2334"/>
<rect x="247" y="281" width="12" height="4" fill="#63576c"/>
<rect x="259" y="281" width="3" height="4" fill="#2e2334"/>
<rect x="262" y="281" width="4" height="4" fill="#63576c"/>
<rect x="266" y="281" width="8" height="4" fill="#3e3548"/>
<rect x="274" y="281" width="8" height="4" fill="#63576c"/>
<rect x="282" y="281" width="4" height="4" fill="#2e2334"/>
<rect x="137" y="285" width="4" height="3" fill="#2e2334"/>
<rect x="141" y="285" width="12" height="3" fill="#3e3548"/>
<rect x="153" y="285" width="4" height="3" fill="#2e2334"/>
<rect x="157" y="285" width="12" height="3" fill="#63576c"/>
<rect x="169" y="285" width="4" height="3" fill="#2e2334"/>
<rect x="173" y="285" width="7" height="3" fill="#3e3548"/>
<rect x="180" y="285" width="4" height="3" fill="#2e2334"/>
<rect x="184" y="285" width="8" height="3" fill="#3e3548"/>
<rect x="192" y="285" width="8" height="3" fill="#63576c"/>
<rect x="200" y="285" width="4" height="3" fill="#2e2334"/>
<rect x="204" y="285" width="12" height="3" fill="#3e3548"/>
<rect x="216" y="285" width="3" height="3" fill="#2e2334"/>
<rect x="219" y="285" width="12" height="3" fill="#63576c"/>
<rect x="231" y="285" width="4" height="3" fill="#2e2334"/>
<rect x="235" y="285" width="8" height="3" fill="#3e3548"/>
<rect x="243" y="285" width="4" height="3" fill="#2e2334"/>
<rect x="247" y="285" width="8" height="3" fill="#3e3548"/>
<rect x="255" y="285" width="7" height="3" fill="#63576c"/>
<rect x="262" y="285" width="4" height="3" fill="#2e2334"/>
<rect x="266" y="285" width="12" height="3" fill="#3e3548"/>
<rect x="278" y="285" width="4" height="3" fill="#2e2334"/>
<rect x="137" y="288" width="4" height="4" fill="#2e2334"/>
<rect x="141" y="288" width="8" height="4" fill="#3e3548"/>
<rect x="149" y="288" width="4" height="4" fill="#2e2334"/>
<rect x="157" y="288" width="4" height="4" fill="#2e2334"/>
<rect x="161" y="288" width="4" height="4" fill="#3e3548"/>
<rect x="165" y="288" width="8" height="4" fill="#63576c"/>
<rect x="173" y="288" width="7" height="4" fill="#2e2334"/>
<rect x="184" y="288" width="16" height="4" fill="#2e2334"/>
<rect x="204" y="288" width="8" height="4" fill="#2e2334"/>
<rect x="212" y="288" width="4" height="4" fill="#3e3548"/>
<rect x="216" y="288" width="3" height="4" fill="#63576c"/>
<rect x="219" y="288" width="4" height="4" fill="#2e2334"/>
<rect x="223" y="288" width="4" height="4" fill="#3e3548"/>
<rect x="227" y="288" width="8" height="4" fill="#63576c"/>
<rect x="235" y="288" width="8" height="4" fill="#2e2334"/>
<rect x="243" y="288" width="12" height="4" fill="#3e3548"/>
<rect x="255" y="288" width="7" height="4" fill="#2e2334"/>
<rect x="266" y="288" width="12" height="4" fill="#2e2334"/>
<rect x="141" y="292" width="8" height="4" fill="#2e2334"/>
<rect x="161" y="292" width="12" height="4" fill="#2e2334"/>
<rect x="212" y="292" width="7" height="4" fill="#2e2334"/>
<rect x="223" y="292" width="12" height="4" fill="#2e2334"/>
<rect x="243" y="292" width="12" height="4" fill="#2e2334"/>
<rect x="51" y="20" width="1" height="571" fill="#000"/>
<rect x="113" y="20" width="1" height="571" fill="#000"/>
<rect x="176" y="20" width="1" height="571" fill="#000"/>
<rect x="238" y="20" width="1" height="571" fill="#000"/>
<rect x="301" y="20" width="1" height="571" fill="#000"/>
<rect x="363" y="20" width="1" height="571" fill="#000"/>
<rect x="426" y="20" width="1" height="571" fill="#000"/>
<rect x="489" y="20" width="1" height="571" fill="#000"/>
<rect x="551" y="20" width="1" height="571" fill="#000"/>
<rect x="614" y="20" width="1" height="571" fill="#000"/>
<rect x="676" y="20" width="1" height="571" fill="#000"/>
<rect x="739" y="20" width="1" height="571" fill="#000"/>
<rect x="801" y="20" width="1" height="571" fill="#000"/>
<rect x="51" y="49" width="751" height="1" fill="#000"/>
<rect x="51" y="112" width="751" height="1" fill="#000"/>
<rect x="51" y="174" width="751" height="1" fill="#000"/>
<rect x="51" y="237" width="751" height="1" fill="#000"/>
<rect x="51" y="300" width="751" height="1" fill="#000"/>
<rect x="51" y="362" width="751" height="1" fill="#000"/>
<rect x="51" y="425" width="751" height="1" fill="#000"/>
<rect x="51" y="487" width="751" height="1" fill="#000"/>
<rect x="51" y="550" width="751" height="1" fill="#000"/>
<rect x="2" y="14" width="1" height="6" fill="#f0f0f0"/>
<rect x="27" y="14" width="1" height="6" fill="#f0f0f0"/>
<rect x="51" y="4" width="1" height="16" fill="#f0f0f0"/>
<rect x="75" y="14" width="1" height="6" fill="#f0f0f0"/>
<rect x="100" y="14" width="1" height="6" fill="#f0f0f0"/>
<rect x="124" y="14" width="1" height="6" fill="#f0f0f0"/>
<rect x="149" y="9" width="1" height="11" fill="#f0f0f0"/>
<rect x="173" y="14" width="1" height="6" fill="#f0f0f0"/>
<rect x="198" y="14" width="1" height="6" fill="#f0f0f0"/>
<rect x="222" y="14" width="1" height="6" fill="#f0f0f0"/>
<rect x="246" y="4" width="1" height="16" fill="#f0f0f0"/>
<rect x="271" y="14" width="1" height="6" fill="#f0f0f0"/>
<rect x="295" y="14" width="1" height="6" fill="#f0f0f0"/>
<rect x="320" y="14" width="1" height="6" fill="#f0f0f0"/>
<rect x="344" y="9" width="1" height="11" fill="#f0f0f0"/>
<rect x="369" y="14" width="1" height="6" fill="#f0f0f0"/>
<rect x="393" y="14" width="1" height="6" fill="#f0f0f0"/>
<rect x="417" y="14" width="1" height="6" fill="#f0f0f0"/>
<rect x="442" y="4" width="1" height="16" fill="#f0f0f0"/>
<rect x="466" y="14" width="1" height="6" fill="#f0f0f0"/>
<rect x="491" y="14" width="1" height="6" fill="#f0f0f0"/>
<rect x="515" y="14" width="1" height="6" fill="#f0f0f0"/>
<rect x="540" y="9" width="1" height="11" fill="#f0f0f0"/>
<rect x="564" y="14" width="1" height="6" fill="#f0f0f0"/>
<rect x="588" y="14" width="1" height="6" fill="#f0f0f0"/>
<rect x="613" y="14" width="1" height="6" fill="#f0f0f0"/>
<rect x="637" y="4" width="1" height="16" fill="#f0f0f0"/>
<rect x="662" y="14" width="1" height="6" fill="#f0f0f0"/>
<rect x="686" y="14" width="1" height="6" fill="#f0f0f0"/>
<rect x="711" y="14" width="1" height="6" fill="#f0f0f0"/>
<rect x="735" y="9" width="1" height="11" fill="#f0f0f0"/>
<rect x="759" y="14" width="1" height="6" fill="#f0f0f0"/>
<rect x="784" y="14" width="1" height="6" fill="#f0f0f0"/>
<rect x="808" y="14" width="1" height="6" fill="#f0f0f0"/>
<rect x="833" y="4" width="1" height="16" fill="#f0f0f0"/>
<rect x="857" y="14" width="1" height="6" fill="#f0f0f0"/>
<rect x="882" y="14" width="1" height="6" fill="#f0f0f0"/>
<rect x="906" y="14" width="1" height="6" fill="#f0f0f0"/>
<rect x="930" y="9" width="1" height="11" fill="#f0f0f0"/>
<rect x="955" y="14" width="1" height="6" fill="#f0f0f0"/>
<rect x="979" y="14" width="1" height="6" fill="#f0f0f0"/>
<rect x="1004" y="14" width="1" height="6" fill="#f0f0f0"/>
<rect x="1028" y="4" width="1" height="16" fill="#f0f0f0"/>
<rect x="1053" y="14" width="1" height="6" fill="#f0f0f0"/>
<text x="54" y="19" font-family="Liberation Sans" font-size="16" fill="#f0f0f0" textLength="8.4" lengthAdjust="spacingAndGlyphs" shape-rendering="auto">0</text>
<text x="249" y="19" font-family="Liberation Sans" font-size="16" fill="#f0f0f0" textLength="16.8" lengthAdjust="spacingAndGlyphs" shape-rendering="auto">50</text>
<text x="445" y="19" font-family="Liberation Sans" font-size="16" fill="#f0f0f0" textLength="25.2" lengthAdjust="spacingAndGlyphs" shape-rendering="auto">100</text>
<text x="640" y="19" font-family="Liberation Sans" font-size="16" fill="#f0f0f0" textLength="25.2" lengthAdjust="spacingAndGlyphs" shape-rendering="auto">150</text>
<text x="836" y="19" font-family="Liberation Sans" font-size="16" fill="#f0f0f0" textLength="25.2" lengthAdjust="spacingAndGlyphs" shape-rendering="auto">200</text>
<text x="1031" y="19" font-family="Liberation Sans" font-size="16" fill="#f0f0f0" textLength="25.2" lengthAdjust="spacingAndGlyphs" shape-rendering="auto">250</text>
<rect x="2" y="14" width="1" height="6" fill="#f0f0f0"/>
<rect x="27" y="14" width="1" height="6" fill="#f0f0f0"/>
<rect x="75" y="14" width="1" height="6" fill="#f0f0f0"/>
<rect x="100" y="14" width="1" height="6" fill="#f0f0f0"/>
<rect x="124" y="14" width="1" height="6" fill="#f0f0f0"/>
<rect x="149" y="9" width="1" height="11" fill="#f0f0f0"/>
<rect x="173" y="14" width="1" height="6" fill="#f0f0f0"/>
<rect x="198" y="14" width="1" height="6" fill="#f0f0f0"/>
<rect x="222" y="14" width="1" height="6" fill="#f0f0f0"/>
<rect x="271" y="14" width="1" height="6" fill="#f0f0f0"/>
<rect x="295" y="14" width="1" height="6" fill="#f0f0f0"/>
<rect x="320" y="14" width="1" height="6" fill="#f0f0f0"/>
<rect x="344" y="9" width="1" height="11" fill="#f0f0f0"/>
<rect x="369" y="14" width="1" height="6" fill="#f0f0f0"/>
<rect x="393" y="14" width="1" height="6" fill="#f0f0f0"/>
<rect x="417" y="14" width="1" height="6" fill="#f0f0f0"/>
<rect x="466" y="14" width="1" height="6" fill="#f0f0f0"/>
<rect x="491" y="14" width="1" height="6" fill="#f0f0f0"/>
<rect x="515" y="14" width="1" height="6" fill="#f0f0f0"/>
<rect x="540" y="9" width="1" height="11" fill="#f0f0f0"/>
<rect x="564" y="14" width="1" height="6" fill="#f0f0f0"/>
<rect x="588" y="14" width="1" height="6" fill="#f0f0f0"/>
<rect x="613" y="14" width="1" height="6" fill="#f0f0f0"/>
<rect x="662" y="14" width="1" height="6" fill="#f0f0f0"/>
<rect x="686" y="14" width="1" height="6" fill="#f0f0f0"/>
<rect x="711" y="14" width="1" height="6" fill="#f0f0f0"/>
<rect x="735" y="9" width="1" height="11" fill="#f0f0f0"/>
<rect x="759" y="14" width="1" height="6" fill="#f0f0f0"/>
<rect x="784" y="14" width="1" height="6" fill="#f0f0f0"/>
<rect x="808" y="14" width="1" height="6" fill="#f0f0f0"/>
<rect x="857" y="14" width="1" height="6" fill="#f0f0f0"/>
<rect x="882" y="14" width="1" height="6" fill="#f0f0f0"/>
<rect x="906" y="14" width="1" height="6" fill="#f0f0f0"/>
<rect x="930" y="9" width="1" height="11" fill="#f0f0f0"/>
<rect x="955" y="14" width="1" height="6" fill="#f0f0f0"/>
<rect x="979" y="14" width="1" height="6" fill="#f0f0f0"/>
<rect x="1004" y="14" width="1" height="6" fill="#f0f0f0"/>
<rect x="1053" y="14" width="1" height="6" fill="#f0f0f0"/>
<rect x="104" y="102" width="10" height="10" fill="#000"/>
<rect x="106" y="104" width="6" height="6" fill="#fff"/>
<rect x="104" y="201" width="10" height="10" fill="#000"/>
<rect x="106" y="203" width="6" height="6" fill="#fff"/>
<rect x="104" y="300" width="10" height="10" fill="#000"/>
<rect x="106" y="302" width="6" height="6" fill="#fff"/>
<rect x="203" y="102" width="10" height="10" fill="#000"/>
<rect x="205" y="104" width="6" height="6" fill="#fff"/>
<rect x="203" y="300" width="10" height="10" fill="#000"/>
<rect x="205" y="302" width="6" height="6" fill="#fff"/>
<rect x="301" y="102" width="10" height="10" fill="#000"/>
<rect x="303" y="104" width="6" height="6" fill="#fff"/>
<rect x="301" y="201" width="10" height="10" fill="#000"/>
<rect x="303" y="203" width="6" height="6" fill="#fff"/>
<rect x="301" y="300" width="10" height="10" fill="#000"/>
<rect x="303" y="302" width="6" height="6" fill="#fff"/>
<rect x="114" y="112" width="187" height="1" fill="#000"/>
<rect x="114" y="299" width="187" height="1" fill="#000"/>
<rect x="114" y="112" width="1" height="188" fill="#000"/>
<rect x="300" y="112" width="1" height="188" fill="#000"/>
<rect x="115" y="112" width="6" height="1" fill="#fff"/>
<rect x="286" y="299" width="6" height="1" fill="#fff"/>
<rect x="114" y="113" width="1" height="6" fill="#fff"/>
<rect x="300" y="119" width="1" height="6" fill="#fff"/>
<rect x="128" y="112" width="6" height="1" fill="#fff"/>
<rect x="273" y="299" width="6" height="1" fill="#fff"/>
<rect x="114" y="126" width="1" height="6" fill="#fff"/>
<rect x="300" y="132" width="1" height="6" fill="#fff"/>
<rect x="140" y="112" width="6" height="1" fill="#fff"/>
<rect x="261" y="299" width="6" height="1" fill="#fff"/>
<rect x="114" y="139" width="1" height="6" fill="#fff"/>
<rect x="300" y="144" width="1" height="6" fill="#fff"/>
<rect x="153" y="112" width="6" height="1" fill="#fff"/>
<rect x="248" y="299" width="6" height="1" fill="#fff"/>
<rect x="114" y="151" width="1" height="6" fill="#fff"/>
<rect x="300" y="157" width="1" height="6" fill="#fff"/>
<rect x="166" y="112" width="6" height="1" fill="#fff"/>
<rect x="235" y="299" width="6" height="1" fill="#fff"/>
<rect x="114" y="164" width="1" height="6" fill="#fff"/>
<rect x="300" y="170" width="1" height="6" fill="#fff"/>
<rect x="179" y="112" width="6" height="1" fill="#fff"/>
<rect x="222" y="299" width="6" height="1" fill="#fff"/>
<rect x="114" y="177" width="1" height="6" fill="#fff"/>
<rect x="300" y="183" width="1" height="6" fill="#fff"/>
<rect x="192" y="112" width="6" height="1" fill="#fff"/>
<rect x="210" y="299" width="6" height="1" fill="#fff"/>
<rect x="114" y="190" width="1" height="6" fill="#fff"/>
<rect x="300" y="195" width="1" height="6" fill="#fff"/>
<rect x="204" y="112" width="6" height="1" fill="#fff"/>
<rect x="197" y="299" width="6" height="1" fill="#fff"/>
<rect x="114" y="203" width="1" height="6" fill="#fff"/>
<rect x="300" y="208" width="1" height="6" fill="#fff"/>
<rect x="217" y="112" width="6" height="1" fill="#fff"/>
<rect x="184" y="299" width="6" height="1" fill="#fff"/>
<rect x="114" y="215" width="1" height="6" fill="#fff"/>
<rect x="300" y="221" width="1" height="6" fill="#fff"/>
<rect x="230" y="112" width="6" height="1" fill="#fff"/>
<rect x="171" y="299" width="6" height="1" fill="#fff"/>
<rect x="114" y="228" width="1" height="6" fill="#fff"/>
<rect x="300" y="234" width="1" height="6" fill="#fff"/>
<rect x="242" y="112" width="6" height="1" fill="#fff"/>
<rect x="159" y="299" width="6" height="1" fill="#fff"/>
<rect x="114" y="241" width="1" height="6" fill="#fff"/>
<rect x="300" y="246" width="1" height="6" fill="#fff"/>
<rect x="255" y="112" width="6" height="1" fill="#fff"/>
<rect x="146" y="299" width="6" height="1" fill="#fff"/>
<rect x="114" y="254" width="1" height="6" fill="#fff"/>
<rect x="300" y="259" width="1" height="6" fill="#fff"/>
<rect x="268" y="112" width="6" height="1" fill="#fff"/>
<rect x="133" y="299" width="6" height="1" fill="#fff"/>
<rect x="114" y="267" width="1" height="6" fill="#fff"/>
<rect x="300" y="272" width="1" height="6" fill="#fff"/>
<rect x="281" y="112" width="6" height="1" fill="#fff"/>
<rect x="120" y="299" width="6" height="1" fill="#fff"/>
<rect x="114" y="279" width="1" height="6" fill="#fff"/>
<rect x="300" y="285" width="1" height="6" fill="#fff"/>
<rect x="294" y="112" width="6" height="1" fill="#fff"/>
<rect x="114" y="292" width="1" height="6" fill="#fff"/>
<rect x="300" y="297" width="1" height="3" fill="#fff"/>
<rect x="299" y="298" width="2" height="1" fill="#fff"/><rect x="299" y="299" width="2" height="1" fill="#fff"/>
<path d="M309.5,293 L309.5,301.5" stroke="#fff" stroke-width="2.8" stroke-linecap="round" shape-rendering="auto"/>
<path d="M309.5,313 L309.5,322" stroke="#fff" stroke-width="2.8" stroke-linecap="round" shape-rendering="auto"/>
<path d="M295,307.5 L303.5,307.5" stroke="#fff" stroke-width="2.8" stroke-linecap="round" shape-rendering="auto"/>
<path d="M315,307.5 L324,307.5" stroke="#fff" stroke-width="2.8" stroke-linecap="round" shape-rendering="auto"/>
<path d="M309.5,293.5 L309.5,301" stroke="#000" stroke-width="1"/>
<path d="M309.5,313.5 L309.5,321.5" stroke="#000" stroke-width="1"/>
<path d="M295.5,307.5 L303,307.5" stroke="#000" stroke-width="1"/>
<path d="M315.5,307.5 L323.5,307.5" stroke="#000" stroke-width="1"/>
<rect x="305" y="304" width="5" height="4" fill="#1e8ae0"/><rect x="306" y="305" width="3" height="2" fill="#fff"/>
<rect x="266" y="328" width="22" height="22" fill="#000"/>
<rect x="267" y="329" width="2" height="1" fill="#fff"/>
<rect x="267" y="348" width="2" height="1" fill="#fff"/>
<rect x="267" y="329" width="1" height="2" fill="#fff"/>
<rect x="286" y="329" width="1" height="2" fill="#fff"/>
<rect x="270" y="329" width="2" height="1" fill="#fff"/>
<rect x="270" y="348" width="2" height="1" fill="#fff"/>
<rect x="267" y="332" width="1" height="2" fill="#fff"/>
<rect x="286" y="332" width="1" height="2" fill="#fff"/>
<rect x="273" y="329" width="2" height="1" fill="#fff"/>
<rect x="273" y="348" width="2" height="1" fill="#fff"/>
<rect x="267" y="335" width="1" height="2" fill="#fff"/>
<rect x="286" y="335" width="1" height="2" fill="#fff"/>
<rect x="276" y="329" width="2" height="1" fill="#fff"/>
<rect x="276" y="348" width="2" height="1" fill="#fff"/>
<rect x="267" y="338" width="1" height="2" fill="#fff"/>
<rect x="286" y="338" width="1" height="2" fill="#fff"/>
<rect x="279" y="329" width="2" height="1" fill="#fff"/>
<rect x="279" y="348" width="2" height="1" fill="#fff"/>
<rect x="267" y="341" width="1" height="2" fill="#fff"/>
<rect x="286" y="341" width="1" height="2" fill="#fff"/>
<rect x="282" y="329" width="2" height="1" fill="#fff"/>
<rect x="282" y="348" width="2" height="1" fill="#fff"/>
<rect x="267" y="344" width="1" height="2" fill="#fff"/>
<rect x="286" y="344" width="1" height="2" fill="#fff"/>
<rect x="285" y="329" width="2" height="1" fill="#fff"/>
<rect x="285" y="348" width="2" height="1" fill="#fff"/>
<rect x="267" y="347" width="1" height="2" fill="#fff"/>
<rect x="286" y="347" width="1" height="2" fill="#fff"/>
<rect x="270" y="332" width="14" height="14" fill="#fff"/>
<rect x="330" y="328" width="22" height="22" fill="#000"/>
<rect x="331" y="329" width="2" height="1" fill="#fff"/>
<rect x="331" y="348" width="2" height="1" fill="#fff"/>
<rect x="331" y="329" width="1" height="2" fill="#fff"/>
<rect x="350" y="329" width="1" height="2" fill="#fff"/>
<rect x="334" y="329" width="2" height="1" fill="#fff"/>
<rect x="334" y="348" width="2" height="1" fill="#fff"/>
<rect x="331" y="332" width="1" height="2" fill="#fff"/>
<rect x="350" y="332" width="1" height="2" fill="#fff"/>
<rect x="337" y="329" width="2" height="1" fill="#fff"/>
<rect x="337" y="348" width="2" height="1" fill="#fff"/>
<rect x="331" y="335" width="1" height="2" fill="#fff"/>
<rect x="350" y="335" width="1" height="2" fill="#fff"/>
<rect x="340" y="329" width="2" height="1" fill="#fff"/>
<rect x="340" y="348" width="2" height="1" fill="#fff"/>
<rect x="331" y="338" width="1" height="2" fill="#fff"/>
<rect x="350" y="338" width="1" height="2" fill="#fff"/>
<rect x="343" y="329" width="2" height="1" fill="#fff"/>
<rect x="343" y="348" width="2" height="1" fill="#fff"/>
<rect x="331" y="341" width="1" height="2" fill="#fff"/>
<rect x="350" y="341" width="1" height="2" fill="#fff"/>
<rect x="346" y="329" width="2" height="1" fill="#fff"/>
<rect x="346" y="348" width="2" height="1" fill="#fff"/>
<rect x="331" y="344" width="1" height="2" fill="#fff"/>
<rect x="350" y="344" width="1" height="2" fill="#fff"/>
<rect x="349" y="329" width="2" height="1" fill="#fff"/>
<rect x="349" y="348" width="2" height="1" fill="#fff"/>
<rect x="331" y="347" width="1" height="2" fill="#fff"/>
<rect x="350" y="347" width="1" height="2" fill="#fff"/>
<rect x="334" y="332" width="14" height="14" fill="#707070"/>
<circle cx="341" cy="339" r="7.3" fill="#fff" stroke="#000" stroke-width="1" stroke-dasharray="2 1.2" shape-rendering="auto"/>
</svg>
<div class="abs" style="left:0;top:600px;width:594px;height:184px;background:#252525;border-top-right-radius:2px"></div>
<div class="abs" style="left:560px;top:604px;width:24px;height:24px;background:#191919"><svg width="24" height="24" style="position:absolute;left:0;top:0"><circle cx="12" cy="6" r="1.9" fill="#d8d8d8"/><circle cx="12" cy="12" r="1.9" fill="#d8d8d8"/><circle cx="12" cy="18" r="1.9" fill="#d8d8d8"/></svg></div>
<div class="abs" style="left:0;top:634px;width:585px;height:1px;background:#3a3a3a"></div>
<div class="abs" style="left:4px;top:646px;font-size:16px;line-height:18px;color:#c9c9c9;white-space:nowrap">canvas.</div>
<div class="abs" style="left:0;top:673px;width:585px;height:1px;background:#3a3a3a"></div>
<div class="abs" style="left:602px;top:600px;width:261px;height:67px;background:#252525;border-radius:2px"></div>
<div class="abs" style="left:612px;top:604px;width:44px;height:24px;background:#191919"><svg width="44" height="24" style="position:absolute;left:0;top:0"><path d="M9.5,3.5 H15.3 Q16.5,3.5 16.5,4.7 V19.3 Q16.5,20.5 15.3,20.5 H6.7 Q5.5,20.5 5.5,19.3 V7.5" fill="none" stroke="#d6d6d6" stroke-width="1.1"/><path d="M5,3 L8.5,3 L5,6.5 Z" fill="#d6d6d6"/><rect x="7" y="12" width="8" height="2.2" fill="#e0e0e0"/><rect x="9.9" y="9" width="2.2" height="8.2" fill="#e0e0e0"/><path d="M28.8,10 L33,14.2 L37.2,10" fill="none" stroke="#d8d8d8" stroke-width="2.6" stroke-linecap="round" stroke-linejoin="round"/></svg></div>
<div class="abs" style="left:665px;top:604px;width:24px;height:24px;background:#191919"><svg width="24" height="24" style="position:absolute;left:0;top:0"><path d="M7,7 L17,17 M17,7 L7,17" stroke="#8a8a8a" stroke-width="4.2" stroke-linecap="round"/><path d="M7,7 L17,17 M17,7 L7,17" stroke="#191919" stroke-width="2.1" stroke-linecap="round"/></svg></div>
<div class="abs" style="left:698px;top:604px;width:24px;height:24px;background:#191919"><svg width="24" height="24" style="position:absolute;left:0;top:0"><path d="M12,4.5 L18.6,15 H14.5 V19.5 H9.5 V15 H5.4 Z" fill="none" stroke="#8a8a8a" stroke-width="1.1" stroke-linejoin="round"/></svg></div>
<div class="abs" style="left:731px;top:604px;width:24px;height:24px;background:#191919"><svg width="24" height="24" style="position:absolute;left:0;top:0"><path d="M12,19.5 L18.6,9 H14.5 V4.5 H9.5 V9 H5.4 Z" fill="none" stroke="#8a8a8a" stroke-width="1.1" stroke-linejoin="round"/></svg></div>
<div class="abs" style="left:764px;top:604px;width:24px;height:24px;background:#191919"><svg width="24" height="24" style="position:absolute;left:0;top:0"><path d="M3.5,5.5 V16.5 Q3.5,18 5,18 H8" fill="none" stroke="#d0d0d0" stroke-width="1.1"/><path d="M7,2.5 H13 Q14.5,2.5 14.5,4 V5.5" fill="none" stroke="#d0d0d0" stroke-width="1.1"/><path d="M3,2 L6,2 L3,5 Z" fill="#d0d0d0"/><path d="M13.5,6.5 H19.5 Q21.0,6.5 21.0,8.0 V20.0 Q21.0,21.5 19.5,21.5 H11.0 Q9.5,21.5 9.5,20.0 V10.5" fill="none" stroke="#d0d0d0" stroke-width="1.1"/><path d="M9,6 L12,6 L9,9 Z" fill="#d0d0d0"/></svg></div>
<div class="abs" style="left:797px;top:604px;width:24px;height:24px;background:#191919"><svg width="24" height="24" style="position:absolute;left:0;top:0"><path d="M10.5,2.5 H16.5 Q18.0,2.5 18.0,4.0 V20.0 Q18.0,21.5 16.5,21.5 H8.0 Q6.5,21.5 6.5,20.0 V6.5" fill="none" stroke="#8a8a8a" stroke-width="1.1"/><path d="M6,2 L9,2 L6,5 Z" fill="#8a8a8a"/><path d="M6.5,15.5 H18" stroke="#8a8a8a" stroke-width="1.1"/><path d="M10.7,12.5 H13.3 V16.5 H15.5 L12,20 L8.5,16.5 H10.7 Z" fill="#8a8a8a"/></svg></div>
<div class="abs" style="left:830px;top:604px;width:24px;height:24px;background:#191919"><svg width="24" height="24" style="position:absolute;left:0;top:0"><path d="M5.5,19 V5.5 H11 M5.5,11.8 H10" fill="none" stroke="#d8d8d8" stroke-width="1.2"/><path d="M12.5,5.5 L19,19 M19,5.5 L12.5,19" fill="none" stroke="#d8d8d8" stroke-width="1.2"/></svg></div>
<div class="abs" style="left:612px;top:637px;font-size:16px;line-height:18px;color:#bdbdbd;white-space:nowrap">Blend mode:</div>
<div class="abs" style="left:705px;top:632px;width:149px;height:27px;background:#191919"><div class="abs" style="left:6px;top:5px;font-size:16px;line-height:18px;color:#d0d0d0">Normal</div><svg class="abs" style="left:0;top:0" width="149" height="27"><path d="M134.5,10.5 L139,15 L143.5,10.5" fill="none" stroke="#c8c8c8" stroke-width="2" stroke-linecap="round" stroke-linejoin="round"/></svg></div>
<div class="abs" style="left:868px;top:600px;width:210px;height:31px;background:#252525;border-radius:2px"></div>
<div class="abs" style="left:878px;top:604px;width:24px;height:24px;background:#191919"><svg width="24" height="24" style="position:absolute;left:0;top:0"><rect x="5" y="11" width="14" height="2" fill="#d8d8d8"/><rect x="11" y="5" width="2" height="14" fill="#d8d8d8"/></svg></div>
<div class="abs" style="left:906px;top:604px;width:24px;height:24px;background:#191919"><svg width="24" height="24" style="position:absolute;left:0;top:0"><rect x="6" y="11" width="12" height="2.2" fill="#6e6e6e"/></svg></div>
<div class="abs" style="left:934px;top:604px;width:24px;height:24px;background:#191919"><svg width="24" height="24" style="position:absolute;left:0;top:0"><path d="M10,4.5 H17 V19 H7 V7.5 Z" fill="#c8c8c8"/><path d="M7,4.5 H9 L7,6.5 Z" fill="#c8c8c8"/></svg></div>
<div class="abs" style="left:962px;top:604px;width:24px;height:24px;background:#191919"><svg width="24" height="24" style="position:absolute;left:0;top:0"><path d="M4.5,12.2 L10,7 V10.8 H20 V13.6 H10 V17.4 Z" fill="#777"/></svg></div>
<div class="abs" style="left:990px;top:604px;width:24px;height:24px;background:#191919"><svg width="24" height="24" style="position:absolute;left:0;top:0"><path d="M19.5,12.2 L14,7 V10.8 H4 V13.6 H14 V17.4 Z" fill="#777"/></svg></div>
<div class="abs" style="left:1038px;top:604px;width:24px;height:24px;background:#191919"><svg width="24" height="24" style="position:absolute;left:0;top:0"><rect x="7" y="5" width="2.4" height="14" fill="#c8c8c8"/><path d="M11,12 L19,5 V19 Z" fill="#c8c8c8"/></svg></div>
<div class="abs" style="left:1066px;top:604px;width:24px;height:24px;background:#191919"><svg width="24" height="24" style="position:absolute;left:0;top:0"></svg></div>
<div class="abs" style="left:868px;top:632px;width:117px;height:8px;background:#3a3a3a;border-radius:4px"></div>
<div class="abs" style="left:602px;top:672px;width:480px;height:120px;background:#252525;border-radius:2px"></div><div class="abs" style="left:612px;top:676px;width:84px;height:31px;background:#191919"><svg class="abs" style="left:0;top:0" width="84" height="31"><ellipse cx="14" cy="16.5" rx="9.8" ry="4.3" fill="none" stroke="#c8c8c8" stroke-width="1.1"/><circle cx="14" cy="16.5" r="3" fill="#c8c8c8"/><path d="M34,15 H50 V20 Q50,26 44,26 H40 Q34,26 34,20 Z" fill="#c8c8c8"/><path d="M46.5,15 V9.5 Q46.5,6.5 49,6.5 Q51.5,6.5 51.5,9.5 V13.5" fill="none" stroke="#c8c8c8" stroke-width="1.1"/><circle cx="42" cy="19.5" r="1.8" fill="#111"/><path d="M41,20 H43 L43.4,23.5 H40.6 Z" fill="#111"/><path d="M60.5,8 H66 Q68,8 68,10 V12 H76 Q78,12 78,14 V22 Q78,24 76,24 H64 Q62,24 62,22 L60.5,14 Q60,12 60,10 Z" fill="#c8c8c8"/><path d="M65.5,16.5 L69,20 L72.5,16.5" fill="none" stroke="#191919" stroke-width="1.4"/><path d="M78,11.5 Q80.8,11.5 80.8,14 V21 Q80.8,23 78.5,23.5" fill="none" stroke="#c8c8c8" stroke-width="1.1"/></svg></div>
<div class="abs" style="left:696px;top:678px;width:169px;height:29px;background:#3a3a3a;border-radius:2px"><div class="abs" style="left:40px;top:6px;font-size:16px;line-height:18px;color:#c4c4c4;white-space:nowrap">Opacity: 100</div><svg class="abs" style="left:0;top:0" width="169" height="29"><path d="M155.5,8.5 L160,4 L164.5,8.5 M155.5,20.5 L160,25 L164.5,20.5" fill="none" stroke="#ababab" stroke-width="1.9" stroke-linecap="round" stroke-linejoin="round"/></svg></div>
<div class="abs" style="left:870px;top:676px;width:38px;height:28px;border:3px solid #c8c8c8;background:#3b3b3b"><div class="abs" style="left:-2px;top:5px;width:38px;text-align:center;font-size:16px;line-height:18px;color:#c8c8c8">1</div></div>
<div class="abs" style="left:612px;top:714px;width:82px;height:40px;background:#191919"><svg class="abs" style="left:0;top:0" width="82" height="40"><ellipse cx="14" cy="20.5" rx="9.8" ry="4.3" fill="none" stroke="#c8c8c8" stroke-width="1.1"/><circle cx="14" cy="20.5" r="3" fill="#c8c8c8"/><path d="M34,19 H50 V24 Q50,30 44,30 H40 Q34,30 34,24 Z" fill="#c8c8c8"/><path d="M46.5,19 V13.5 Q46.5,10.5 49,10.5 Q51.5,10.5 51.5,13.5 V17.5" fill="none" stroke="#c8c8c8" stroke-width="1.1"/><circle cx="42" cy="23.5" r="1.8" fill="#111"/><path d="M41,24 H43 L43.4,27.5 H40.6 Z" fill="#111"/><path d="M61,16.5 H65.5 V23.5 H61" fill="none" stroke="#c8c8c8" stroke-width="1"/><path d="M79,16.5 H74.5 V23.5 H79" fill="none" stroke="#c8c8c8" stroke-width="1"/></svg></div>
<div class="abs" style="left:694px;top:712px;width:168px;height:38px;border:3px solid #c8c8c8;background:#3b3b3b"><div class="abs" style="left:3px;top:10px;font-size:16px;line-height:18px;color:#c8c8c8;white-space:nowrap">Tilemap 2</div><svg class="abs" style="left:0;top:0" width="169" height="39"><rect x="150" y="14" width="11" height="11" fill="#c0c0c0"/><rect x="151.7" y="15.7" width="3.1" height="3.1" fill="#3b3b3b"/><rect x="156.2" y="15.7" width="3.1" height="3.1" fill="#3b3b3b"/><rect x="151.7" y="20.2" width="3.1" height="3.1" fill="#3b3b3b"/><rect x="156.2" y="20.2" width="3.1" height="3.1" fill="#3b3b3b"/></svg></div>
<div class="abs" style="left:870px;top:712px;width:38px;height:38px;border:3px solid #c8c8c8;background:#a0a0a0"><svg class="abs" style="left:0;top:0" width="38" height="38" shape-rendering="crispEdges"><rect x="5" y="5" width="6" height="5" fill="#575957"/><rect x="11" y="5" width="10" height="5" fill="#787878"/><rect x="21" y="5" width="10" height="5" fill="#575957"/><rect x="31" y="5" width="2" height="5" fill="#787878"/><rect x="5" y="10" width="6" height="10" fill="#787878"/><rect x="11" y="10" width="10" height="10" fill="#575957"/><rect x="21" y="10" width="10" height="10" fill="#787878"/><rect x="31" y="10" width="2" height="10" fill="#575957"/><rect x="5" y="20" width="6" height="10" fill="#575957"/><rect x="11" y="20" width="10" height="10" fill="#787878"/><rect x="21" y="20" width="10" height="10" fill="#575957"/><rect x="31" y="20" width="2" height="10" fill="#787878"/><rect x="5" y="30" width="6" height="3" fill="#787878"/><rect x="11" y="30" width="10" height="3" fill="#575957"/><rect x="21" y="30" width="10" height="3" fill="#787878"/><rect x="31" y="30" width="2" height="3" fill="#575957"/><rect x="7" y="10" width="1" height="1" fill="#3a2a48"/><rect x="8" y="10" width="1" height="1" fill="#5a4a68"/><rect x="9" y="10" width="1" height="1" fill="#3a2a48"/><rect x="10" y="10" width="1" height="1" fill="#3a2a48"/><rect x="11" y="10" width="1" height="1" fill="#5a4a68"/><rect x="12" y="10" width="1" height="1" fill="#3a2a48"/><rect x="7" y="11" width="1" height="1" fill="#2e2334"/><rect x="8" y="11" width="1" height="1" fill="#63576c"/><rect x="9" y="11" width="1" height="1" fill="#3e3548"/><rect x="10" y="11" width="1" height="1" fill="#63576c"/><rect x="11" y="11" width="1" height="1" fill="#2e2334"/><rect x="8" y="12" width="1" height="1" fill="#2e2334"/><rect x="9" y="12" width="1" height="1" fill="#63576c"/><rect x="10" y="12" width="1" height="1" fill="#2e2334"/><rect x="11" y="12" width="1" height="1" fill="#63576c"/><rect x="8" y="13" width="1" height="1" fill="#3e3548"/><rect x="9" y="13" width="1" height="1" fill="#2e2334"/><rect x="10" y="13" width="1" height="1" fill="#63576c"/><rect x="11" y="13" width="1" height="1" fill="#3e3548"/><rect x="12" y="13" width="1" height="1" fill="#2e2334"/><rect x="8" y="14" width="1" height="1" fill="#2e2334"/><rect x="9" y="14" width="1" height="1" fill="#2e2334"/><rect x="11" y="14" width="1" height="1" fill="#2e2334"/><rect x="12" y="14" width="1" height="1" fill="#2e2334"/><rect x="8" y="15" width="1" height="1" fill="#2e2334"/><rect x="11" y="15" width="1" height="1" fill="#2e2334"/><rect x="12" y="15" width="1" height="1" fill="#2e2334"/></svg></div><svg width="0" height="0" style="position:absolute"><defs><symbol id="tex" viewBox="0 0 16 16" shape-rendering="crispEdges"><rect x="0" y="0" width="3" height="1" fill="#3e3548"/><rect x="3" y="0" width="3" height="1" fill="#2e2334"/><rect x="6" y="0" width="1" height="1" fill="#3e3548"/><rect x="7" y="0" width="1" height="1" fill="#2e2334"/><rect x="8" y="0" width="3" height="1" fill="#63576c"/><rect x="11" y="0" width="1" height="1" fill="#2e2334"/><rect x="12" y="0" width="1" height="1" fill="#3e3548"/><rect x="13" y="0" width="1" height="1" fill="#2e2334"/><rect x="14" y="0" width="2" height="1" fill="#3e3548"/><rect x="0" y="1" width="1" height="1" fill="#3e3548"/><rect x="1" y="1" width="2" height="1" fill="#2e2334"/><rect x="3" y="1" width="3" height="1" fill="#63576c"/><rect x="6" y="1" width="1" height="1" fill="#2e2334"/><rect x="7" y="1" width="1" height="1" fill="#63576c"/><rect x="8" y="1" width="1" height="1" fill="#3e3548"/><rect x="9" y="1" width="3" height="1" fill="#63576c"/><rect x="12" y="1" width="1" height="1" fill="#2e2334"/><rect x="13" y="1" width="1" height="1" fill="#63576c"/><rect x="14" y="1" width="1" height="1" fill="#2e2334"/><rect x="15" y="1" width="1" height="1" fill="#3e3548"/><rect x="0" y="2" width="1" height="1" fill="#2e2334"/><rect x="1" y="2" width="3" height="1" fill="#3e3548"/><rect x="4" y="2" width="1" height="1" fill="#63576c"/><rect x="5" y="2" width="1" height="1" fill="#2e2334"/><rect x="6" y="2" width="4" height="1" fill="#3e3548"/><rect x="10" y="2" width="2" height="1" fill="#2e2334"/><rect x="12" y="2" width="1" height="1" fill="#3e3548"/><rect x="13" y="2" width="2" height="1" fill="#63576c"/><rect x="15" y="2" width="1" height="1" fill="#2e2334"/><rect x="0" y="3" width="1" height="1" fill="#63576c"/><rect x="1" y="3" width="1" height="1" fill="#2e2334"/><rect x="2" y="3" width="1" height="1" fill="#3e3548"/><rect x="3" y="3" width="4" height="1" fill="#2e2334"/><rect x="7" y="3" width="2" height="1" fill="#3e3548"/><rect x="9" y="3" width="1" height="1" fill="#2e2334"/><rect x="10" y="3" width="2" height="1" fill="#63576c"/><rect x="12" y="3" width="1" height="1" fill="#2e2334"/><rect x="13" y="3" width="2" height="1" fill="#3e3548"/><rect x="15" y="3" width="1" height="1" fill="#2e2334"/><rect x="0" y="4" width="1" height="1" fill="#3e3548"/><rect x="1" y="4" width="1" height="1" fill="#63576c"/><rect x="2" y="4" width="1" height="1" fill="#2e2334"/><rect x="3" y="4" width="4" height="1" fill="#63576c"/><rect x="7" y="4" width="2" height="1" fill="#2e2334"/><rect x="9" y="4" width="2" height="1" fill="#3e3548"/><rect x="11" y="4" width="2" height="1" fill="#63576c"/><rect x="13" y="4" width="2" height="1" fill="#2e2334"/><rect x="15" y="4" width="1" height="1" fill="#63576c"/><rect x="0" y="5" width="1" height="1" fill="#3e3548"/><rect x="1" y="5" width="1" height="1" fill="#2e2334"/><rect x="2" y="5" width="3" height="1" fill="#63576c"/><rect x="5" y="5" width="1" height="1" fill="#3e3548"/><rect x="6" y="5" width="1" height="1" fill="#2e2334"/><rect x="7" y="5" width="2" height="1" fill="#63576c"/><rect x="9" y="5" width="1" height="1" fill="#2e2334"/><rect x="10" y="5" width="2" height="1" fill="#3e3548"/><rect x="12" y="5" width="1" height="1" fill="#2e2334"/><rect x="13" y="5" width="2" height="1" fill="#63576c"/><rect x="15" y="5" width="1" height="1" fill="#3e3548"/><rect x="0" y="6" width="1" height="1" fill="#3e3548"/><rect x="1" y="6" width="1" height="1" fill="#2e2334"/><rect x="2" y="6" width="1" height="1" fill="#63576c"/><rect x="3" y="6" width="2" height="1" fill="#3e3548"/><rect x="5" y="6" width="1" height="1" fill="#63576c"/><rect x="6" y="6" width="1" height="1" fill="#2e2334"/><rect x="7" y="6" width="1" height="1" fill="#3e3548"/><rect x="8" y="6" width="2" height="1" fill="#63576c"/><rect x="10" y="6" width="1" height="1" fill="#2e2334"/><rect x="11" y="6" width="1" height="1" fill="#3e3548"/><rect x="12" y="6" width="1" height="1" fill="#2e2334"/><rect x="13" y="6" width="3" height="1" fill="#3e3548"/><rect x="0" y="7" width="1" height="1" fill="#2e2334"/><rect x="1" y="7" width="3" height="1" fill="#3e3548"/><rect x="4" y="7" width="2" height="1" fill="#2e2334"/><rect x="6" y="7" width="4" height="1" fill="#3e3548"/><rect x="10" y="7" width="1" height="1" fill="#63576c"/><rect x="11" y="7" width="1" height="1" fill="#2e2334"/><rect x="12" y="7" width="1" height="1" fill="#63576c"/><rect x="13" y="7" width="1" height="1" fill="#2e2334"/><rect x="14" y="7" width="1" height="1" fill="#3e3548"/><rect x="15" y="7" width="1" height="1" fill="#2e2334"/><rect x="0" y="8" width="1" height="1" fill="#63576c"/><rect x="1" y="8" width="1" height="1" fill="#2e2334"/><rect x="2" y="8" width="1" height="1" fill="#3e3548"/><rect x="3" y="8" width="1" height="1" fill="#2e2334"/><rect x="4" y="8" width="2" height="1" fill="#63576c"/><rect x="6" y="8" width="1" height="1" fill="#2e2334"/><rect x="7" y="8" width="1" height="1" fill="#3e3548"/><rect x="8" y="8" width="1" height="1" fill="#2e2334"/><rect x="9" y="8" width="1" height="1" fill="#3e3548"/><rect x="10" y="8" width="1" height="1" fill="#2e2334"/><rect x="11" y="8" width="3" height="1" fill="#63576c"/><rect x="14" y="8" width="1" height="1" fill="#2e2334"/><rect x="15" y="8" width="1" height="1" fill="#63576c"/><rect x="0" y="9" width="1" height="1" fill="#63576c"/><rect x="1" y="9" width="1" height="1" fill="#2e2334"/><rect x="2" y="9" width="1" height="1" fill="#3e3548"/><rect x="3" y="9" width="1" height="1" fill="#2e2334"/><rect x="4" y="9" width="2" height="1" fill="#3e3548"/><rect x="6" y="9" width="1" height="1" fill="#63576c"/><rect x="7" y="9" width="1" height="1" fill="#2e2334"/><rect x="8" y="9" width="1" height="1" fill="#63576c"/><rect x="9" y="9" width="2" height="1" fill="#2e2334"/><rect x="11" y="9" width="2" height="1" fill="#3e3548"/><rect x="13" y="9" width="1" height="1" fill="#63576c"/><rect x="14" y="9" width="1" height="1" fill="#2e2334"/><rect x="15" y="9" width="1" height="1" fill="#63576c"/><rect x="0" y="10" width="1" height="1" fill="#3e3548"/><rect x="1" y="10" width="1" height="1" fill="#63576c"/><rect x="2" y="10" width="1" height="1" fill="#2e2334"/><rect x="3" y="10" width="1" height="1" fill="#63576c"/><rect x="4" y="10" width="1" height="1" fill="#2e2334"/><rect x="5" y="10" width="1" height="1" fill="#3e3548"/><rect x="6" y="10" width="1" height="1" fill="#2e2334"/><rect x="7" y="10" width="4" height="1" fill="#63576c"/><rect x="11" y="10" width="1" height="1" fill="#2e2334"/><rect x="12" y="10" width="2" height="1" fill="#3e3548"/><rect x="14" y="10" width="1" height="1" fill="#2e2334"/><rect x="15" y="10" width="1" height="1" fill="#3e3548"/><rect x="0" y="11" width="1" height="1" fill="#3e3548"/><rect x="1" y="11" width="1" height="1" fill="#2e2334"/><rect x="2" y="11" width="3" height="1" fill="#63576c"/><rect x="5" y="11" width="1" height="1" fill="#2e2334"/><rect x="6" y="11" width="1" height="1" fill="#63576c"/><rect x="7" y="11" width="2" height="1" fill="#3e3548"/><rect x="9" y="11" width="1" height="1" fill="#63576c"/><rect x="10" y="11" width="1" height="1" fill="#2e2334"/><rect x="11" y="11" width="1" height="1" fill="#63576c"/><rect x="12" y="11" width="2" height="1" fill="#2e2334"/><rect x="14" y="11" width="2" height="1" fill="#3e3548"/><rect x="0" y="12" width="1" height="1" fill="#3e3548"/><rect x="1" y="12" width="1" height="1" fill="#2e2334"/><rect x="2" y="12" width="2" height="1" fill="#3e3548"/><rect x="4" y="12" width="2" height="1" fill="#63576c"/><rect x="6" y="12" width="1" height="1" fill="#2e2334"/><rect x="7" y="12" width="3" height="1" fill="#3e3548"/><rect x="10" y="12" width="1" height="1" fill="#2e2334"/><rect x="11" y="12" width="3" height="1" fill="#63576c"/><rect x="14" y="12" width="1" height="1" fill="#2e2334"/><rect x="15" y="12" width="1" height="1" fill="#3e3548"/><rect x="0" y="13" width="1" height="1" fill="#2e2334"/><rect x="1" y="13" width="4" height="1" fill="#3e3548"/><rect x="5" y="13" width="1" height="1" fill="#2e2334"/><rect x="6" y="13" width="1" height="1" fill="#63576c"/><rect x="7" y="13" width="2" height="1" fill="#2e2334"/><rect x="9" y="13" width="1" height="1" fill="#3e3548"/><rect x="10" y="13" width="1" height="1" fill="#63576c"/><rect x="11" y="13" width="1" height="1" fill="#2e2334"/><rect x="12" y="13" width="1" height="1" fill="#3e3548"/><rect x="13" y="13" width="2" height="1" fill="#63576c"/><rect x="15" y="13" width="1" height="1" fill="#2e2334"/><rect x="0" y="14" width="1" height="1" fill="#63576c"/><rect x="1" y="14" width="2" height="1" fill="#2e2334"/><rect x="3" y="14" width="1" height="1" fill="#3e3548"/><rect x="4" y="14" width="1" height="1" fill="#2e2334"/><rect x="5" y="14" width="4" height="1" fill="#63576c"/><rect x="9" y="14" width="1" height="1" fill="#2e2334"/><rect x="10" y="14" width="1" height="1" fill="#3e3548"/><rect x="11" y="14" width="1" height="1" fill="#2e2334"/><rect x="12" y="14" width="2" height="1" fill="#3e3548"/><rect x="14" y="14" width="1" height="1" fill="#2e2334"/><rect x="15" y="14" width="1" height="1" fill="#63576c"/><rect x="0" y="15" width="1" height="1" fill="#3e3548"/><rect x="1" y="15" width="2" height="1" fill="#63576c"/><rect x="3" y="15" width="1" height="1" fill="#2e2334"/><rect x="4" y="15" width="3" height="1" fill="#3e3548"/><rect x="7" y="15" width="1" height="1" fill="#63576c"/><rect x="8" y="15" width="1" height="1" fill="#2e2334"/><rect x="9" y="15" width="1" height="1" fill="#63576c"/><rect x="10" y="15" width="1" height="1" fill="#2e2334"/><rect x="11" y="15" width="2" height="1" fill="#3e3548"/><rect x="13" y="15" width="1" height="1" fill="#2e2334"/><rect x="14" y="15" width="2" height="1" fill="#63576c"/></symbol></defs></svg>
<div class="abs" style="left:-18px;top:684px;width:58px;height:58px;background:#191919"><svg class="abs" style="left:6px;top:6px" width="46" height="46" shape-rendering="crispEdges"><use href="#tex" x="0" y="0" width="46" height="46"/><rect x="0.00" y="0.00" width="2.88" height="2.88" fill="#7a7a7a"/><rect x="2.88" y="0.00" width="2.88" height="2.88" fill="#7a7a7a"/><rect x="5.75" y="0.00" width="2.88" height="2.88" fill="#5b5d5b"/><rect x="8.62" y="0.00" width="2.88" height="2.88" fill="#5b5d5b"/><rect x="11.50" y="0.00" width="2.88" height="2.88" fill="#7a7a7a"/><rect x="14.38" y="0.00" width="2.88" height="2.88" fill="#7a7a7a"/><rect x="17.25" y="0.00" width="2.88" height="2.88" fill="#5b5d5b"/><rect x="20.12" y="0.00" width="2.88" height="2.88" fill="#5b5d5b"/><rect x="23.00" y="0.00" width="2.88" height="2.88" fill="#7a7a7a"/><rect x="25.88" y="0.00" width="2.88" height="2.88" fill="#7a7a7a"/><rect x="28.75" y="0.00" width="2.88" height="2.88" fill="#5b5d5b"/><rect x="31.62" y="0.00" width="2.88" height="2.88" fill="#5b5d5b"/><rect x="34.50" y="0.00" width="2.88" height="2.88" fill="#7a7a7a"/><rect x="37.38" y="0.00" width="2.88" height="2.88" fill="#7a7a7a"/><rect x="40.25" y="0.00" width="2.88" height="2.88" fill="#5b5d5b"/><rect x="43.12" y="0.00" width="2.88" height="2.88" fill="#5b5d5b"/><rect x="0.00" y="2.88" width="2.88" height="2.88" fill="#7a7a7a"/><rect x="2.88" y="2.88" width="2.88" height="2.88" fill="#7a7a7a"/><rect x="5.75" y="2.88" width="2.88" height="2.88" fill="#5b5d5b"/><rect x="8.62" y="2.88" width="2.88" height="2.88" fill="#5b5d5b"/><rect x="11.50" y="2.88" width="2.88" height="2.88" fill="#7a7a7a"/><rect x="14.38" y="2.88" width="2.88" height="2.88" fill="#7a7a7a"/><rect x="28.75" y="2.88" width="2.88" height="2.88" fill="#5b5d5b"/><rect x="31.62" y="2.88" width="2.88" height="2.88" fill="#5b5d5b"/><rect x="34.50" y="2.88" width="2.88" height="2.88" fill="#7a7a7a"/><rect x="37.38" y="2.88" width="2.88" height="2.88" fill="#7a7a7a"/><rect x="40.25" y="2.88" width="2.88" height="2.88" fill="#5b5d5b"/><rect x="43.12" y="2.88" width="2.88" height="2.88" fill="#5b5d5b"/><rect x="34.50" y="5.75" width="2.88" height="2.88" fill="#5b5d5b"/><rect x="37.38" y="5.75" width="2.88" height="2.88" fill="#5b5d5b"/><rect x="40.25" y="5.75" width="2.88" height="2.88" fill="#7a7a7a"/><rect x="43.12" y="5.75" width="2.88" height="2.88" fill="#7a7a7a"/><rect x="37.38" y="8.62" width="2.88" height="2.88" fill="#5b5d5b"/><rect x="40.25" y="8.62" width="2.88" height="2.88" fill="#7a7a7a"/><rect x="43.12" y="8.62" width="2.88" height="2.88" fill="#7a7a7a"/><rect x="40.25" y="11.50" width="2.88" height="2.88" fill="#5b5d5b"/><rect x="43.12" y="11.50" width="2.88" height="2.88" fill="#5b5d5b"/><rect x="43.12" y="14.38" width="2.88" height="2.88" fill="#5b5d5b"/><rect x="43.12" y="17.25" width="2.88" height="2.88" fill="#7a7a7a"/><rect x="43.12" y="20.12" width="2.88" height="2.88" fill="#7a7a7a"/><rect x="43.12" y="23.00" width="2.88" height="2.88" fill="#5b5d5b"/><rect x="43.12" y="25.88" width="2.88" height="2.88" fill="#5b5d5b"/><rect x="43.12" y="28.75" width="2.88" height="2.88" fill="#7a7a7a"/><rect x="43.12" y="31.62" width="2.88" height="2.88" fill="#7a7a7a"/><rect x="43.12" y="34.50" width="2.88" height="2.88" fill="#5b5d5b"/><rect x="43.12" y="37.38" width="2.88" height="2.88" fill="#5b5d5b"/><rect x="43.12" y="40.25" width="2.88" height="2.88" fill="#7a7a7a"/><rect x="43.12" y="43.12" width="2.88" height="2.88" fill="#7a7a7a"/></svg></div>
<div class="abs" style="left:44px;top:684px;width:58px;height:58px;background:#191919"><svg class="abs" style="left:6px;top:6px" width="46" height="46" shape-rendering="crispEdges"><use href="#tex" x="0" y="0" width="46" height="46"/><rect x="40.25" y="37.38" width="2.88" height="2.88" fill="#5b5d5b"/><rect x="43.12" y="37.38" width="2.88" height="2.88" fill="#5b5d5b"/><rect x="40.25" y="40.25" width="2.88" height="2.88" fill="#7a7a7a"/><rect x="43.12" y="40.25" width="2.88" height="2.88" fill="#7a7a7a"/><rect x="40.25" y="43.12" width="2.88" height="2.88" fill="#7a7a7a"/><rect x="43.12" y="43.12" width="2.88" height="2.88" fill="#7a7a7a"/></svg></div>
<div class="abs" style="left:106px;top:684px;width:58px;height:58px;background:#191919"><svg class="abs" style="left:6px;top:6px" width="46" height="46" shape-rendering="crispEdges"><use href="#tex" x="0" y="0" width="46" height="46"/><rect x="0.00" y="43.12" width="2.88" height="2.88" fill="#5b5d5b"/><rect x="2.88" y="43.12" width="2.88" height="2.88" fill="#5b5d5b"/><rect x="5.75" y="43.12" width="2.88" height="2.88" fill="#7a7a7a"/><rect x="0.00" y="40.25" width="2.88" height="2.88" fill="#5b5d5b"/></svg></div>
<div class="abs" style="left:168px;top:684px;width:58px;height:58px;background:#191919"><svg class="abs" style="left:6px;top:6px" width="46" height="46" shape-rendering="crispEdges"><use href="#tex" x="0" y="0" width="46" height="46"/><rect x="0.00" y="0.00" width="2.88" height="2.88" fill="#7a7a7a"/><rect x="2.88" y="0.00" width="2.88" height="2.88" fill="#7a7a7a"/><rect x="5.75" y="0.00" width="2.88" height="2.88" fill="#5b5d5b"/><rect x="8.62" y="0.00" width="2.88" height="2.88" fill="#5b5d5b"/><rect x="11.50" y="0.00" width="2.88" height="2.88" fill="#7a7a7a"/><rect x="14.38" y="0.00" width="2.88" height="2.88" fill="#7a7a7a"/><rect x="17.25" y="0.00" width="2.88" height="2.88" fill="#5b5d5b"/><rect x="20.12" y="0.00" width="2.88" height="2.88" fill="#5b5d5b"/><rect x="23.00" y="0.00" width="2.88" height="2.88" fill="#7a7a7a"/><rect x="25.88" y="0.00" width="2.88" height="2.88" fill="#7a7a7a"/><rect x="28.75" y="0.00" width="2.88" height="2.88" fill="#5b5d5b"/><rect x="31.62" y="0.00" width="2.88" height="2.88" fill="#5b5d5b"/><rect x="34.50" y="0.00" width="2.88" height="2.88" fill="#7a7a7a"/><rect x="37.38" y="0.00" width="2.88" height="2.88" fill="#7a7a7a"/><rect x="40.25" y="0.00" width="2.88" height="2.88" fill="#5b5d5b"/><rect x="43.12" y="0.00" width="2.88" height="2.88" fill="#5b5d5b"/><rect x="0.00" y="2.88" width="2.88" height="2.88" fill="#7a7a7a"/><rect x="2.88" y="2.88" width="2.88" height="2.88" fill="#7a7a7a"/><rect x="14.38" y="2.88" width="2.88" height="2.88" fill="#7a7a7a"/><rect x="17.25" y="2.88" width="2.88" height="2.88" fill="#5b5d5b"/><rect x="20.12" y="2.88" width="2.88" height="2.88" fill="#5b5d5b"/><rect x="31.62" y="2.88" width="2.88" height="2.88" fill="#5b5d5b"/><rect x="34.50" y="2.88" width="2.88" height="2.88" fill="#7a7a7a"/><rect x="40.25" y="2.88" width="2.88" height="2.88" fill="#5b5d5b"/><rect x="43.12" y="2.88" width="2.88" height="2.88" fill="#5b5d5b"/><rect x="0.00" y="2.88" width="2.88" height="2.88" fill="#7a7a7a"/><rect x="0.00" y="5.75" width="2.88" height="2.88" fill="#5b5d5b"/><rect x="0.00" y="8.62" width="2.88" height="2.88" fill="#5b5d5b"/><rect x="0.00" y="11.50" width="2.88" height="2.88" fill="#7a7a7a"/><rect x="0.00" y="14.38" width="2.88" height="2.88" fill="#7a7a7a"/><rect x="0.00" y="17.25" width="2.88" height="2.88" fill="#5b5d5b"/><rect x="0.00" y="20.12" width="2.88" height="2.88" fill="#5b5d5b"/><rect x="0.00" y="23.00" width="2.88" height="2.88" fill="#7a7a7a"/><rect x="0.00" y="25.88" width="2.88" height="2.88" fill="#7a7a7a"/><rect x="0.00" y="28.75" width="2.88" height="2.88" fill="#5b5d5b"/><rect x="0.00" y="31.62" width="2.88" height="2.88" fill="#5b5d5b"/><rect x="0.00" y="34.50" width="2.88" height="2.88" fill="#7a7a7a"/><rect x="0.00" y="37.38" width="2.88" height="2.88" fill="#7a7a7a"/><rect x="0.00" y="40.25" width="2.88" height="2.88" fill="#5b5d5b"/><rect x="0.00" y="43.12" width="2.88" height="2.88" fill="#5b5d5b"/><rect x="43.12" y="2.88" width="2.88" height="2.88" fill="#5b5d5b"/><rect x="43.12" y="5.75" width="2.88" height="2.88" fill="#7a7a7a"/><rect x="40.25" y="37.38" width="2.88" height="2.88" fill="#5b5d5b"/><rect x="43.12" y="37.38" width="2.88" height="2.88" fill="#5b5d5b"/><rect x="40.25" y="40.25" width="2.88" height="2.88" fill="#7a7a7a"/><rect x="43.12" y="40.25" width="2.88" height="2.88" fill="#7a7a7a"/><rect x="40.25" y="43.12" width="2.88" height="2.88" fill="#7a7a7a"/><rect x="43.12" y="43.12" width="2.88" height="2.88" fill="#7a7a7a"/></svg></div>
<div class="abs" style="left:230px;top:684px;width:58px;height:58px;background:#191919"><svg class="abs" style="left:6px;top:6px" width="46" height="46" shape-rendering="crispEdges"><use href="#tex" x="0" y="0" width="46" height="46"/><rect x="0.00" y="0.00" width="2.88" height="2.88" fill="#7a7a7a"/><rect x="2.88" y="0.00" width="2.88" height="2.88" fill="#7a7a7a"/><rect x="5.75" y="0.00" width="2.88" height="2.88" fill="#5b5d5b"/><rect x="8.62" y="0.00" width="2.88" height="2.88" fill="#5b5d5b"/><rect x="11.50" y="0.00" width="2.88" height="2.88" fill="#7a7a7a"/><rect x="14.38" y="0.00" width="2.88" height="2.88" fill="#7a7a7a"/><rect x="17.25" y="0.00" width="2.88" height="2.88" fill="#5b5d5b"/><rect x="20.12" y="0.00" width="2.88" height="2.88" fill="#5b5d5b"/><rect x="23.00" y="0.00" width="2.88" height="2.88" fill="#7a7a7a"/><rect x="25.88" y="0.00" width="2.88" height="2.88" fill="#7a7a7a"/><rect x="28.75" y="0.00" width="2.88" height="2.88" fill="#5b5d5b"/><rect x="31.62" y="0.00" width="2.88" height="2.88" fill="#5b5d5b"/><rect x="34.50" y="0.00" width="2.88" height="2.88" fill="#7a7a7a"/><rect x="37.38" y="0.00" width="2.88" height="2.88" fill="#7a7a7a"/><rect x="40.25" y="0.00" width="2.88" height="2.88" fill="#5b5d5b"/><rect x="43.12" y="0.00" width="2.88" height="2.88" fill="#5b5d5b"/><rect x="0.00" y="2.88" width="2.88" height="2.88" fill="#7a7a7a"/><rect x="2.88" y="2.88" width="2.88" height="2.88" fill="#7a7a7a"/><rect x="14.38" y="2.88" width="2.88" height="2.88" fill="#7a7a7a"/><rect x="17.25" y="2.88" width="2.88" height="2.88" fill="#5b5d5b"/><rect x="20.12" y="2.88" width="2.88" height="2.88" fill="#5b5d5b"/><rect x="31.62" y="2.88" width="2.88" height="2.88" fill="#5b5d5b"/><rect x="34.50" y="2.88" width="2.88" height="2.88" fill="#7a7a7a"/><rect x="40.25" y="2.88" width="2.88" height="2.88" fill="#5b5d5b"/><rect x="43.12" y="2.88" width="2.88" height="2.88" fill="#5b5d5b"/><rect x="43.12" y="2.88" width="2.88" height="2.88" fill="#5b5d5b"/><rect x="43.12" y="5.75" width="2.88" height="2.88" fill="#7a7a7a"/><rect x="43.12" y="8.62" width="2.88" height="2.88" fill="#7a7a7a"/><rect x="43.12" y="11.50" width="2.88" height="2.88" fill="#5b5d5b"/><rect x="43.12" y="14.38" width="2.88" height="2.88" fill="#5b5d5b"/><rect x="43.12" y="17.25" width="2.88" height="2.88" fill="#7a7a7a"/><rect x="43.12" y="20.12" width="2.88" height="2.88" fill="#7a7a7a"/><rect x="43.12" y="23.00" width="2.88" height="2.88" fill="#5b5d5b"/><rect x="43.12" y="25.88" width="2.88" height="2.88" fill="#5b5d5b"/><rect x="43.12" y="28.75" width="2.88" height="2.88" fill="#7a7a7a"/><rect x="43.12" y="31.62" width="2.88" height="2.88" fill="#7a7a7a"/><rect x="43.12" y="34.50" width="2.88" height="2.88" fill="#5b5d5b"/><rect x="0.00" y="43.12" width="2.88" height="2.88" fill="#5b5d5b"/><rect x="2.88" y="43.12" width="2.88" height="2.88" fill="#5b5d5b"/><rect x="5.75" y="43.12" width="2.88" height="2.88" fill="#7a7a7a"/><rect x="0.00" y="40.25" width="2.88" height="2.88" fill="#5b5d5b"/><rect x="40.25" y="37.38" width="2.88" height="2.88" fill="#5b5d5b"/><rect x="43.12" y="37.38" width="2.88" height="2.88" fill="#5b5d5b"/><rect x="40.25" y="40.25" width="2.88" height="2.88" fill="#7a7a7a"/><rect x="43.12" y="40.25" width="2.88" height="2.88" fill="#7a7a7a"/><rect x="40.25" y="43.12" width="2.88" height="2.88" fill="#7a7a7a"/><rect x="43.12" y="43.12" width="2.88" height="2.88" fill="#7a7a7a"/></svg></div>
<div class="abs" style="left:292px;top:684px;width:58px;height:58px;background:#191919"><svg class="abs" style="left:6px;top:6px" width="46" height="46" shape-rendering="crispEdges"><use href="#tex" x="0" y="0" width="46" height="46"/><rect x="0.00" y="0.00" width="2.88" height="2.88" fill="#7a7a7a"/><rect x="2.88" y="0.00" width="2.88" height="2.88" fill="#7a7a7a"/><rect x="5.75" y="0.00" width="2.88" height="2.88" fill="#5b5d5b"/><rect x="8.62" y="0.00" width="2.88" height="2.88" fill="#5b5d5b"/><rect x="11.50" y="0.00" width="2.88" height="2.88" fill="#7a7a7a"/><rect x="14.38" y="0.00" width="2.88" height="2.88" fill="#7a7a7a"/><rect x="17.25" y="0.00" width="2.88" height="2.88" fill="#5b5d5b"/><rect x="20.12" y="0.00" width="2.88" height="2.88" fill="#5b5d5b"/><rect x="23.00" y="0.00" width="2.88" height="2.88" fill="#7a7a7a"/><rect x="25.88" y="0.00" width="2.88" height="2.88" fill="#7a7a7a"/><rect x="28.75" y="0.00" width="2.88" height="2.88" fill="#5b5d5b"/><rect x="31.62" y="0.00" width="2.88" height="2.88" fill="#5b5d5b"/><rect x="34.50" y="0.00" width="2.88" height="2.88" fill="#7a7a7a"/><rect x="37.38" y="0.00" width="2.88" height="2.88" fill="#7a7a7a"/><rect x="40.25" y="0.00" width="2.88" height="2.88" fill="#5b5d5b"/><rect x="43.12" y="0.00" width="2.88" height="2.88" fill="#5b5d5b"/><rect x="0.00" y="2.88" width="2.88" height="2.88" fill="#7a7a7a"/><rect x="2.88" y="2.88" width="2.88" height="2.88" fill="#7a7a7a"/><rect x="14.38" y="2.88" width="2.88" height="2.88" fill="#7a7a7a"/><rect x="17.25" y="2.88" width="2.88" height="2.88" fill="#5b5d5b"/><rect x="20.12" y="2.88" width="2.88" height="2.88" fill="#5b5d5b"/><rect x="31.62" y="2.88" width="2.88" height="2.88" fill="#5b5d5b"/><rect x="34.50" y="2.88" width="2.88" height="2.88" fill="#7a7a7a"/><rect x="40.25" y="2.88" width="2.88" height="2.88" fill="#5b5d5b"/><rect x="43.12" y="2.88" width="2.88" height="2.88" fill="#5b5d5b"/><rect x="40.25" y="37.38" width="2.88" height="2.88" fill="#5b5d5b"/><rect x="43.12" y="37.38" width="2.88" height="2.88" fill="#5b5d5b"/><rect x="40.25" y="40.25" width="2.88" height="2.88" fill="#7a7a7a"/><rect x="43.12" y="40.25" width="2.88" height="2.88" fill="#7a7a7a"/><rect x="40.25" y="43.12" width="2.88" height="2.88" fill="#7a7a7a"/><rect x="43.12" y="43.12" width="2.88" height="2.88" fill="#7a7a7a"/><rect x="0.00" y="43.12" width="2.88" height="2.88" fill="#5b5d5b"/><rect x="2.88" y="43.12" width="2.88" height="2.88" fill="#5b5d5b"/><rect x="5.75" y="43.12" width="2.88" height="2.88" fill="#7a7a7a"/><rect x="0.00" y="40.25" width="2.88" height="2.88" fill="#5b5d5b"/></svg></div>
<div class="abs" style="left:354px;top:684px;width:58px;height:58px;background:#191919"><svg class="abs" style="left:6px;top:6px" width="46" height="46" shape-rendering="crispEdges"><use href="#tex" x="0" y="0" width="46" height="46"/><rect x="0.00" y="0.00" width="2.88" height="2.88" fill="#7a7a7a"/><rect x="2.88" y="0.00" width="2.88" height="2.88" fill="#7a7a7a"/><rect x="5.75" y="0.00" width="2.88" height="2.88" fill="#5b5d5b"/><rect x="8.62" y="0.00" width="2.88" height="2.88" fill="#5b5d5b"/><rect x="11.50" y="0.00" width="2.88" height="2.88" fill="#7a7a7a"/><rect x="14.38" y="0.00" width="2.88" height="2.88" fill="#7a7a7a"/><rect x="17.25" y="0.00" width="2.88" height="2.88" fill="#5b5d5b"/><rect x="20.12" y="0.00" width="2.88" height="2.88" fill="#5b5d5b"/><rect x="23.00" y="0.00" width="2.88" height="2.88" fill="#7a7a7a"/><rect x="25.88" y="0.00" width="2.88" height="2.88" fill="#7a7a7a"/><rect x="28.75" y="0.00" width="2.88" height="2.88" fill="#5b5d5b"/><rect x="31.62" y="0.00" width="2.88" height="2.88" fill="#5b5d5b"/><rect x="34.50" y="0.00" width="2.88" height="2.88" fill="#7a7a7a"/><rect x="37.38" y="0.00" width="2.88" height="2.88" fill="#7a7a7a"/><rect x="40.25" y="0.00" width="2.88" height="2.88" fill="#5b5d5b"/><rect x="43.12" y="0.00" width="2.88" height="2.88" fill="#5b5d5b"/><rect x="0.00" y="2.88" width="2.88" height="2.88" fill="#7a7a7a"/><rect x="2.88" y="2.88" width="2.88" height="2.88" fill="#7a7a7a"/><rect x="14.38" y="2.88" width="2.88" height="2.88" fill="#7a7a7a"/><rect x="17.25" y="2.88" width="2.88" height="2.88" fill="#5b5d5b"/><rect x="20.12" y="2.88" width="2.88" height="2.88" fill="#5b5d5b"/><rect x="31.62" y="2.88" width="2.88" height="2.88" fill="#5b5d5b"/><rect x="34.50" y="2.88" width="2.88" height="2.88" fill="#7a7a7a"/><rect x="40.25" y="2.88" width="2.88" height="2.88" fill="#5b5d5b"/><rect x="43.12" y="2.88" width="2.88" height="2.88" fill="#5b5d5b"/><rect x="0.00" y="43.12" width="2.88" height="2.88" fill="#5b5d5b"/><rect x="2.88" y="43.12" width="2.88" height="2.88" fill="#5b5d5b"/><rect x="5.75" y="43.12" width="2.88" height="2.88" fill="#7a7a7a"/><rect x="0.00" y="40.25" width="2.88" height="2.88" fill="#5b5d5b"/><rect x="40.25" y="37.38" width="2.88" height="2.88" fill="#5b5d5b"/><rect x="43.12" y="37.38" width="2.88" height="2.88" fill="#5b5d5b"/><rect x="40.25" y="40.25" width="2.88" height="2.88" fill="#7a7a7a"/><rect x="43.12" y="40.25" width="2.88" height="2.88" fill="#7a7a7a"/><rect x="40.25" y="43.12" width="2.88" height="2.88" fill="#7a7a7a"/><rect x="43.12" y="43.12" width="2.88" height="2.88" fill="#7a7a7a"/></svg></div>
<div class="abs" style="left:416px;top:684px;width:58px;height:58px;background:#191919"><svg class="abs" style="left:6px;top:6px" width="46" height="46" shape-rendering="crispEdges"><use href="#tex" x="0" y="0" width="46" height="46"/><rect x="37.38" y="0.00" width="2.88" height="2.88" fill="#7a7a7a"/><rect x="40.25" y="0.00" width="2.88" height="2.88" fill="#5b5d5b"/><rect x="43.12" y="0.00" width="2.88" height="2.88" fill="#5b5d5b"/><rect x="43.12" y="2.88" width="2.88" height="2.88" fill="#5b5d5b"/><rect x="0.00" y="43.12" width="2.88" height="2.88" fill="#5b5d5b"/><rect x="2.88" y="43.12" width="2.88" height="2.88" fill="#5b5d5b"/><rect x="5.75" y="43.12" width="2.88" height="2.88" fill="#7a7a7a"/><rect x="0.00" y="40.25" width="2.88" height="2.88" fill="#5b5d5b"/><rect x="40.25" y="37.38" width="2.88" height="2.88" fill="#5b5d5b"/><rect x="43.12" y="37.38" width="2.88" height="2.88" fill="#5b5d5b"/><rect x="40.25" y="40.25" width="2.88" height="2.88" fill="#7a7a7a"/><rect x="43.12" y="40.25" width="2.88" height="2.88" fill="#7a7a7a"/><rect x="40.25" y="43.12" width="2.88" height="2.88" fill="#7a7a7a"/><rect x="43.12" y="43.12" width="2.88" height="2.88" fill="#7a7a7a"/></svg></div>
<div class="abs" style="left:478px;top:684px;width:58px;height:58px;background:#191919"><svg class="abs" style="left:6px;top:6px" width="46" height="46" shape-rendering="crispEdges"><use href="#tex" x="0" y="0" width="46" height="46"/><rect x="0.00" y="0.00" width="2.88" height="2.88" fill="#7a7a7a"/><rect x="2.88" y="0.00" width="2.88" height="2.88" fill="#7a7a7a"/><rect x="5.75" y="0.00" width="2.88" height="2.88" fill="#5b5d5b"/><rect x="0.00" y="2.88" width="2.88" height="2.88" fill="#7a7a7a"/><rect x="0.00" y="43.12" width="2.88" height="2.88" fill="#5b5d5b"/><rect x="2.88" y="43.12" width="2.88" height="2.88" fill="#5b5d5b"/><rect x="5.75" y="43.12" width="2.88" height="2.88" fill="#7a7a7a"/><rect x="0.00" y="40.25" width="2.88" height="2.88" fill="#5b5d5b"/><rect x="40.25" y="37.38" width="2.88" height="2.88" fill="#5b5d5b"/><rect x="43.12" y="37.38" width="2.88" height="2.88" fill="#5b5d5b"/><rect x="40.25" y="40.25" width="2.88" height="2.88" fill="#7a7a7a"/><rect x="43.12" y="40.25" width="2.88" height="2.88" fill="#7a7a7a"/><rect x="40.25" y="43.12" width="2.88" height="2.88" fill="#7a7a7a"/><rect x="43.12" y="43.12" width="2.88" height="2.88" fill="#7a7a7a"/></svg></div>
<div class="abs" style="left:-18px;top:746px;width:58px;height:58px;background:#191919"><svg class="abs" style="left:6px;top:6px" width="46" height="46" shape-rendering="crispEdges"><use href="#tex" x="0" y="0" width="46" height="46"/><rect x="43.12" y="0.00" width="2.88" height="2.88" fill="#5b5d5b"/><rect x="43.12" y="2.88" width="2.88" height="2.88" fill="#5b5d5b"/><rect x="43.12" y="5.75" width="2.88" height="2.88" fill="#7a7a7a"/><rect x="43.12" y="8.62" width="2.88" height="2.88" fill="#7a7a7a"/><rect x="43.12" y="11.50" width="2.88" height="2.88" fill="#5b5d5b"/><rect x="43.12" y="14.38" width="2.88" height="2.88" fill="#5b5d5b"/><rect x="43.12" y="17.25" width="2.88" height="2.88" fill="#7a7a7a"/><rect x="43.12" y="20.12" width="2.88" height="2.88" fill="#7a7a7a"/><rect x="43.12" y="23.00" width="2.88" height="2.88" fill="#5b5d5b"/><rect x="43.12" y="25.88" width="2.88" height="2.88" fill="#5b5d5b"/><rect x="43.12" y="28.75" width="2.88" height="2.88" fill="#7a7a7a"/><rect x="43.12" y="31.62" width="2.88" height="2.88" fill="#7a7a7a"/><rect x="43.12" y="34.50" width="2.88" height="2.88" fill="#5b5d5b"/><rect x="43.12" y="37.38" width="2.88" height="2.88" fill="#5b5d5b"/><rect x="43.12" y="40.25" width="2.88" height="2.88" fill="#7a7a7a"/><rect x="43.12" y="43.12" width="2.88" height="2.88" fill="#7a7a7a"/><rect x="40.25" y="8.62" width="2.88" height="2.88" fill="#7a7a7a"/><rect x="40.25" y="11.50" width="2.88" height="2.88" fill="#5b5d5b"/><rect x="40.25" y="14.38" width="2.88" height="2.88" fill="#5b5d5b"/><rect x="40.25" y="17.25" width="2.88" height="2.88" fill="#7a7a7a"/><rect x="40.25" y="20.12" width="2.88" height="2.88" fill="#7a7a7a"/><rect x="40.25" y="23.00" width="2.88" height="2.88" fill="#5b5d5b"/><rect x="40.25" y="25.88" width="2.88" height="2.88" fill="#5b5d5b"/><rect x="37.38" y="14.38" width="2.88" height="2.88" fill="#7a7a7a"/><rect x="37.38" y="17.25" width="2.88" height="2.88" fill="#5b5d5b"/><rect x="37.38" y="20.12" width="2.88" height="2.88" fill="#5b5d5b"/></svg></div>
<div class="abs" style="left:44px;top:746px;width:58px;height:58px;background:#191919"><svg class="abs" style="left:6px;top:6px" width="46" height="46" shape-rendering="crispEdges"><use href="#tex" x="0" y="0" width="46" height="46"/><rect x="37.38" y="0.00" width="2.88" height="2.88" fill="#7a7a7a"/><rect x="40.25" y="0.00" width="2.88" height="2.88" fill="#5b5d5b"/><rect x="43.12" y="0.00" width="2.88" height="2.88" fill="#5b5d5b"/><rect x="43.12" y="2.88" width="2.88" height="2.88" fill="#5b5d5b"/></svg></div>
<div class="abs" style="left:106px;top:746px;width:58px;height:58px;background:#191919"><svg class="abs" style="left:6px;top:6px" width="46" height="46" shape-rendering="crispEdges"><use href="#tex" x="0" y="0" width="46" height="46"/><rect x="0.00" y="0.00" width="2.88" height="2.88" fill="#7a7a7a"/><rect x="2.88" y="0.00" width="2.88" height="2.88" fill="#7a7a7a"/><rect x="5.75" y="0.00" width="2.88" height="2.88" fill="#5b5d5b"/><rect x="0.00" y="2.88" width="2.88" height="2.88" fill="#7a7a7a"/></svg></div>
<div class="abs" style="left:168px;top:746px;width:58px;height:58px;background:#191919"><svg class="abs" style="left:6px;top:6px" width="46" height="46" shape-rendering="crispEdges"><use href="#tex" x="0" y="0" width="46" height="46"/><rect x="0.00" y="0.00" width="2.88" height="2.88" fill="#7a7a7a"/><rect x="2.88" y="0.00" width="2.88" height="2.88" fill="#7a7a7a"/><rect x="5.75" y="0.00" width="2.88" height="2.88" fill="#5b5d5b"/><rect x="0.00" y="2.88" width="2.88" height="2.88" fill="#7a7a7a"/><rect x="37.38" y="0.00" width="2.88" height="2.88" fill="#7a7a7a"/><rect x="40.25" y="0.00" width="2.88" height="2.88" fill="#5b5d5b"/><rect x="43.12" y="0.00" width="2.88" height="2.88" fill="#5b5d5b"/><rect x="43.12" y="2.88" width="2.88" height="2.88" fill="#5b5d5b"/><rect x="0.00" y="8.62" width="2.88" height="2.88" fill="#5b5d5b"/><rect x="0.00" y="11.50" width="2.88" height="2.88" fill="#7a7a7a"/><rect x="0.00" y="14.38" width="2.88" height="2.88" fill="#7a7a7a"/><rect x="0.00" y="17.25" width="2.88" height="2.88" fill="#5b5d5b"/><rect x="0.00" y="20.12" width="2.88" height="2.88" fill="#5b5d5b"/><rect x="0.00" y="23.00" width="2.88" height="2.88" fill="#7a7a7a"/><rect x="0.00" y="25.88" width="2.88" height="2.88" fill="#7a7a7a"/><rect x="0.00" y="28.75" width="2.88" height="2.88" fill="#5b5d5b"/><rect x="0.00" y="31.62" width="2.88" height="2.88" fill="#5b5d5b"/><rect x="0.00" y="34.50" width="2.88" height="2.88" fill="#7a7a7a"/><rect x="0.00" y="37.38" width="2.88" height="2.88" fill="#7a7a7a"/><rect x="0.00" y="40.25" width="2.88" height="2.88" fill="#5b5d5b"/><rect x="0.00" y="43.12" width="2.88" height="2.88" fill="#5b5d5b"/></svg></div>
<div class="abs" style="left:230px;top:746px;width:58px;height:58px;background:#191919"><svg class="abs" style="left:6px;top:6px" width="46" height="46" shape-rendering="crispEdges"><use href="#tex" x="0" y="0" width="46" height="46"/><rect x="0.00" y="0.00" width="2.88" height="2.88" fill="#7a7a7a"/><rect x="2.88" y="0.00" width="2.88" height="2.88" fill="#7a7a7a"/><rect x="5.75" y="0.00" width="2.88" height="2.88" fill="#5b5d5b"/><rect x="0.00" y="2.88" width="2.88" height="2.88" fill="#7a7a7a"/><rect x="37.38" y="0.00" width="2.88" height="2.88" fill="#7a7a7a"/><rect x="40.25" y="0.00" width="2.88" height="2.88" fill="#5b5d5b"/><rect x="43.12" y="0.00" width="2.88" height="2.88" fill="#5b5d5b"/><rect x="43.12" y="2.88" width="2.88" height="2.88" fill="#5b5d5b"/><rect x="43.12" y="8.62" width="2.88" height="2.88" fill="#7a7a7a"/><rect x="43.12" y="11.50" width="2.88" height="2.88" fill="#5b5d5b"/><rect x="43.12" y="14.38" width="2.88" height="2.88" fill="#5b5d5b"/><rect x="43.12" y="17.25" width="2.88" height="2.88" fill="#7a7a7a"/><rect x="43.12" y="20.12" width="2.88" height="2.88" fill="#7a7a7a"/><rect x="43.12" y="23.00" width="2.88" height="2.88" fill="#5b5d5b"/><rect x="40.25" y="11.50" width="2.88" height="2.88" fill="#5b5d5b"/><rect x="40.25" y="14.38" width="2.88" height="2.88" fill="#5b5d5b"/><rect x="40.25" y="17.25" width="2.88" height="2.88" fill="#7a7a7a"/></svg></div>
<div class="abs" style="left:292px;top:746px;width:58px;height:58px;background:#191919"><svg class="abs" style="left:6px;top:6px" width="46" height="46" shape-rendering="crispEdges"><use href="#tex" x="0" y="0" width="46" height="46"/><rect x="0.00" y="0.00" width="2.88" height="2.88" fill="#7a7a7a"/><rect x="2.88" y="0.00" width="2.88" height="2.88" fill="#7a7a7a"/><rect x="5.75" y="0.00" width="2.88" height="2.88" fill="#5b5d5b"/><rect x="0.00" y="2.88" width="2.88" height="2.88" fill="#7a7a7a"/><rect x="37.38" y="0.00" width="2.88" height="2.88" fill="#7a7a7a"/><rect x="40.25" y="0.00" width="2.88" height="2.88" fill="#5b5d5b"/><rect x="43.12" y="0.00" width="2.88" height="2.88" fill="#5b5d5b"/><rect x="43.12" y="2.88" width="2.88" height="2.88" fill="#5b5d5b"/></svg></div>
<div class="abs" style="left:354px;top:746px;width:58px;height:58px;background:#191919"><svg class="abs" style="left:6px;top:6px" width="46" height="46" shape-rendering="crispEdges"><use href="#tex" x="0" y="0" width="46" height="46"/><rect x="0.00" y="0.00" width="2.88" height="2.88" fill="#7a7a7a"/><rect x="2.88" y="0.00" width="2.88" height="2.88" fill="#7a7a7a"/><rect x="5.75" y="0.00" width="2.88" height="2.88" fill="#5b5d5b"/><rect x="0.00" y="2.88" width="2.88" height="2.88" fill="#7a7a7a"/><rect x="37.38" y="0.00" width="2.88" height="2.88" fill="#7a7a7a"/><rect x="40.25" y="0.00" width="2.88" height="2.88" fill="#5b5d5b"/><rect x="43.12" y="0.00" width="2.88" height="2.88" fill="#5b5d5b"/><rect x="43.12" y="2.88" width="2.88" height="2.88" fill="#5b5d5b"/></svg></div>
<div class="abs" style="left:416px;top:746px;width:58px;height:58px;background:#191919"><svg class="abs" style="left:6px;top:6px" width="46" height="46" shape-rendering="crispEdges"><use href="#tex" x="0" y="0" width="46" height="46"/><rect x="0.00" y="0.00" width="2.88" height="2.88" fill="#7a7a7a"/><rect x="2.88" y="0.00" width="2.88" height="2.88" fill="#7a7a7a"/><rect x="5.75" y="0.00" width="2.88" height="2.88" fill="#5b5d5b"/><rect x="0.00" y="2.88" width="2.88" height="2.88" fill="#7a7a7a"/><rect x="37.38" y="0.00" width="2.88" height="2.88" fill="#7a7a7a"/><rect x="40.25" y="0.00" width="2.88" height="2.88" fill="#5b5d5b"/><rect x="43.12" y="0.00" width="2.88" height="2.88" fill="#5b5d5b"/><rect x="43.12" y="2.88" width="2.88" height="2.88" fill="#5b5d5b"/></svg></div>
<div class="abs" style="left:478px;top:746px;width:58px;height:58px;background:#191919"><svg class="abs" style="left:6px;top:6px" width="46" height="46" shape-rendering="crispEdges"><use href="#tex" x="0" y="0" width="46" height="46"/><rect x="0.00" y="0.00" width="2.88" height="2.88" fill="#7a7a7a"/><rect x="2.88" y="0.00" width="2.88" height="2.88" fill="#7a7a7a"/><rect x="5.75" y="0.00" width="2.88" height="2.88" fill="#5b5d5b"/><rect x="0.00" y="2.88" width="2.88" height="2.88" fill="#7a7a7a"/><rect x="37.38" y="0.00" width="2.88" height="2.88" fill="#7a7a7a"/><rect x="40.25" y="0.00" width="2.88" height="2.88" fill="#5b5d5b"/><rect x="43.12" y="0.00" width="2.88" height="2.88" fill="#5b5d5b"/><rect x="43.12" y="2.88" width="2.88" height="2.88" fill="#5b5d5b"/></svg></div>
</div></body></html>
